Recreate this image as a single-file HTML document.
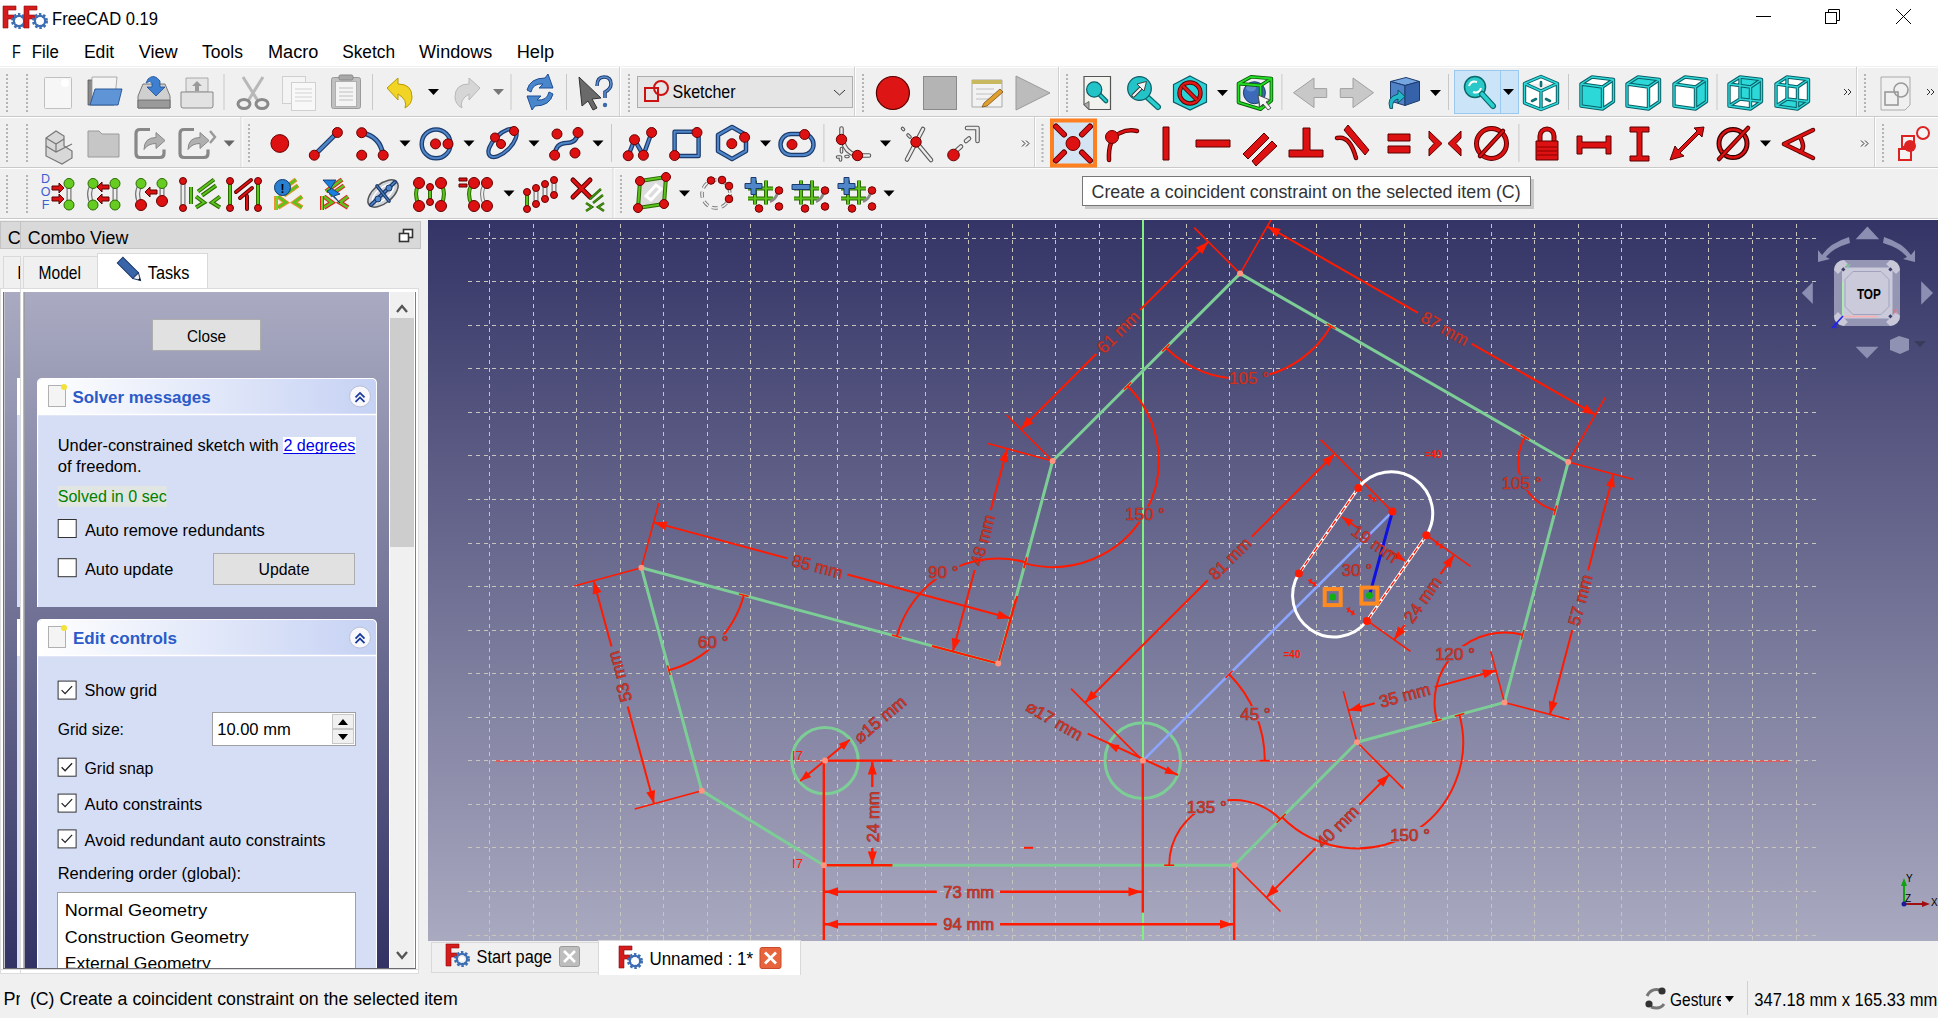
<!DOCTYPE html><html><head><meta charset="utf-8"><style>html,body{margin:0;padding:0;background:#f0f0f0}body{width:1938px;height:1018px;overflow:hidden}svg{display:block}</style></head><body><svg width="1938" height="1018" viewBox="0 0 1938 1018"><rect x="0" y="0" width="1938" height="66" fill="#ffffff" />
<g transform="translate(3,6) scale(1.0)"><path d="M0,0 H13 V4 H5 V9 H11 V13 H5 V22 H0Z" fill="#d41c1c" stroke="#8a0a0a" stroke-width="0.6"/><circle cx="16" cy="15" r="6" fill="none" stroke="#3d6eb4" stroke-width="4" stroke-dasharray="2.2 1.6"/><circle cx="16" cy="15" r="5.2" fill="none" stroke="#3d6eb4" stroke-width="2.2"/><circle cx="16" cy="15" r="2.2" fill="#fff"/></g>
<g transform="translate(24,6) scale(1.0)"><path d="M0,0 H13 V4 H5 V9 H11 V13 H5 V22 H0Z" fill="#d41c1c" stroke="#8a0a0a" stroke-width="0.6"/><circle cx="16" cy="15" r="6" fill="none" stroke="#3d6eb4" stroke-width="4" stroke-dasharray="2.2 1.6"/><circle cx="16" cy="15" r="5.2" fill="none" stroke="#3d6eb4" stroke-width="2.2"/><circle cx="16" cy="15" r="2.2" fill="#fff"/></g>
<text x="52.0" y="24.5" font-family="Liberation Sans" font-size="18" fill="#000" text-anchor="start" textLength="106.0" lengthAdjust="spacingAndGlyphs" >FreeCAD 0.19</text>
<text x="12.1" y="57.5" font-family="Liberation Sans" font-size="18" fill="#000" text-anchor="start" textLength="8.8" lengthAdjust="spacingAndGlyphs" >F</text>
<text x="31.8" y="57.5" font-family="Liberation Sans" font-size="18" fill="#000" text-anchor="start" textLength="27.1" lengthAdjust="spacingAndGlyphs" >File</text>
<text x="83.9" y="57.5" font-family="Liberation Sans" font-size="18" fill="#000" text-anchor="start" textLength="30.3" lengthAdjust="spacingAndGlyphs" >Edit</text>
<text x="138.7" y="57.5" font-family="Liberation Sans" font-size="18" fill="#000" text-anchor="start" textLength="39.0" lengthAdjust="spacingAndGlyphs" >View</text>
<text x="202.1" y="57.5" font-family="Liberation Sans" font-size="18" fill="#000" text-anchor="start" textLength="40.8" lengthAdjust="spacingAndGlyphs" >Tools</text>
<text x="268.0" y="57.5" font-family="Liberation Sans" font-size="18" fill="#000" text-anchor="start" textLength="50.4" lengthAdjust="spacingAndGlyphs" >Macro</text>
<text x="342.2" y="57.5" font-family="Liberation Sans" font-size="18" fill="#000" text-anchor="start" textLength="52.8" lengthAdjust="spacingAndGlyphs" >Sketch</text>
<text x="419.1" y="57.5" font-family="Liberation Sans" font-size="18" fill="#000" text-anchor="start" textLength="73.2" lengthAdjust="spacingAndGlyphs" >Windows</text>
<text x="516.7" y="57.5" font-family="Liberation Sans" font-size="18" fill="#000" text-anchor="start" textLength="37.5" lengthAdjust="spacingAndGlyphs" >Help</text>
<line x1="1756.0" y1="16.5" x2="1771.0" y2="16.5" stroke="#000" stroke-width="1" />
<rect x="1825.5" y="12.5" width="11" height="11" fill="none" stroke="#000" stroke-width="1" />
<path d="M1828.5,12.5 V9.5 H1839.5 V20.5 H1836.5" fill="none" stroke="#000" stroke-width="1"/>
<line x1="1896.0" y1="9.0" x2="1911.0" y2="24.0" stroke="#000" stroke-width="1" />
<line x1="1911.0" y1="9.0" x2="1896.0" y2="24.0" stroke="#000" stroke-width="1" />
<rect x="0" y="66" width="1938" height="154" fill="#f0f0f0" />
<rect x="0" y="67" width="1938" height="1" fill="#ffffff" />
<rect x="0" y="116" width="1938" height="1" fill="#c9c9c9" />
<rect x="0" y="117" width="1938" height="1" fill="#ffffff" />
<rect x="0" y="167" width="1938" height="1" fill="#c9c9c9" />
<rect x="0" y="168" width="1938" height="1" fill="#ffffff" />
<rect x="0" y="218" width="1938" height="1" fill="#c9c9c9" />
<rect x="0" y="219" width="1938" height="1" fill="#ffffff" />
<path d="M6,74h2v2h-2zM6,78h2v2h-2zM6,82h2v2h-2zM6,86h2v2h-2zM6,90h2v2h-2zM6,94h2v2h-2zM6,98h2v2h-2zM6,102h2v2h-2zM6,106h2v2h-2zM6,110h2v2h-2z" fill="#b4b4b4"/>
<path d="M26,74h2v2h-2zM26,78h2v2h-2zM26,82h2v2h-2zM26,86h2v2h-2zM26,90h2v2h-2zM26,94h2v2h-2zM26,98h2v2h-2zM26,102h2v2h-2zM26,106h2v2h-2zM26,110h2v2h-2z" fill="#b4b4b4"/>
<rect x="44.5" y="77.5" width="27" height="31" fill="#f6f6f6" stroke="#c0c0c0" stroke-width="1" rx="1" />
<circle cx="65" cy="83" r="4" fill="#ffffff"/>
<path d="M88,80 h8 l2,3 h16 v22 h-26z" fill="#8a8a8a" stroke="#555" stroke-width="0.8"/>
<path d="M92,77 h25 l-2,20 h-23z" fill="#f4f4f4" stroke="#999" stroke-width="0.8"/>
<path d="M95,89 h27 l-4,16 h-28z" fill="#5f95d6" stroke="#2d5a9a" stroke-width="1"/>
<path d="M138,96 l5,-12 h22 l5,12 v12 h-32z" fill="#cfcfcf" stroke="#777" stroke-width="1"/>
<path d="M138,100 h32 v8 h-32z" fill="#9a9a9a" stroke="#666" stroke-width="0.8"/>
<path d="M148,79 q6,-6 12,2 v6 h5 l-9,9 l-9,-9 h5 v-4 q-2,-3 -6,0z" fill="#3f7fd0" stroke="#1e4f95" stroke-width="0.8"/>
<path d="M186,78 h22 v14 h-22z" fill="#e6e6e6" stroke="#999" stroke-width="0.8"/>
<path d="M181,92 h32 v14 a2,2 0 0 1 -2,2 h-28 a2,2 0 0 1 -2,-2z" fill="#e2e2e2" stroke="#888" stroke-width="1"/>
<path d="M197,81 l5,5 h-3 v5 h-4 v-5 h-3z" fill="#9a9a9a"/>
<rect x="223.5" y="74" width="1" height="36" fill="#c8c8c8" />
<path d="M243,77 L258,101 M263,77 L248,101" stroke="#b8b8b8" stroke-width="3" fill="none"/>
<ellipse cx="244" cy="104" rx="6" ry="4.5" fill="none" stroke="#8a8a8a" stroke-width="3"/><ellipse cx="262" cy="104" rx="6" ry="4.5" fill="none" stroke="#8a8a8a" stroke-width="3"/>
<rect x="282.5" y="76.5" width="23" height="27" fill="#f4f4f4" stroke="#d0d0d0" stroke-width="1" />
<rect x="291.5" y="82.5" width="24" height="28" fill="#f8f8f8" stroke="#d0d0d0" stroke-width="1" />
<line x1="295.0" y1="89.0" x2="312.0" y2="89.0" stroke="#d8d8d8" stroke-width="1.2" />
<line x1="295.0" y1="93.0" x2="312.0" y2="93.0" stroke="#d8d8d8" stroke-width="1.2" />
<line x1="295.0" y1="97.0" x2="312.0" y2="97.0" stroke="#d8d8d8" stroke-width="1.2" />
<line x1="295.0" y1="101.0" x2="312.0" y2="101.0" stroke="#d8d8d8" stroke-width="1.2" />
<rect x="331.5" y="77.5" width="29" height="31" fill="#c0c0c0" stroke="#9a9a9a" stroke-width="1" rx="2" />
<rect x="335.5" y="81.5" width="21" height="25" fill="#f4f4f4" stroke="#b0b0b0" stroke-width="1" />
<rect x="339" y="75" width="14" height="5" fill="#a8a8a8" stroke="#888" stroke-width="1" rx="1.5" />
<line x1="339.0" y1="88.0" x2="353.0" y2="88.0" stroke="#c8c8c8" stroke-width="1.2" />
<line x1="339.0" y1="92.0" x2="353.0" y2="92.0" stroke="#c8c8c8" stroke-width="1.2" />
<line x1="339.0" y1="96.0" x2="353.0" y2="96.0" stroke="#c8c8c8" stroke-width="1.2" />
<line x1="339.0" y1="100.0" x2="353.0" y2="100.0" stroke="#c8c8c8" stroke-width="1.2" />
<rect x="372" y="74" width="1" height="36" fill="#c8c8c8" />
<path d="M387,88 L398,78 V84 Q412,84 412,97 Q412,104 405,108 Q408,100 398,94 V100Z" fill="#f2d424" stroke="#b89a00" stroke-width="1"/>
<path d="M428,89 h11 l-5.5,6z" fill="#000"/>
<path d="M480,88 L469,78 V84 Q455,84 455,97 Q455,104 462,108 Q459,100 469,94 V100Z" fill="#d6d6d6" stroke="#b8b8b8" stroke-width="1"/>
<path d="M493,89 h11 l-5.5,6z" fill="#777"/>
<rect x="510.5" y="74" width="1" height="36" fill="#c8c8c8" />
<path d="M527,90 Q530,78 545,78 L548,74 L553,88 L539,88 L543,84 Q533,83 531,92Z" fill="#4a86cc" stroke="#1e4f95" stroke-width="1"/>
<path d="M553,94 Q550,106 535,106 L532,110 L527,96 L541,96 L537,100 Q547,101 549,92Z" fill="#4a86cc" stroke="#1e4f95" stroke-width="1"/>
<rect x="566" y="74" width="1" height="36" fill="#c8c8c8" />
<path d="M579,77 L601,98 L592,99 L597,108 L593,110 L588,101 L582,106Z" fill="#6a6a6a" stroke="#333" stroke-width="1"/>
<path d="M597,86 Q597,77 604,77 Q611,77 611,84 Q611,89 605,92 V98" fill="none" stroke="#1c3a6e" stroke-width="3.5"/><path d="M597,86 Q597,77 604,77 Q611,77 611,84 Q611,89 605,92 V98" fill="none" stroke="#5a8ed0" stroke-width="1.6"/>
<circle cx="605" cy="105" r="2.2" fill="#3a6aaa"/>
<rect x="619" y="67" width="1" height="49" fill="#d0d0d0" />
<rect x="620" y="67" width="1" height="49" fill="#ffffff" />
<path d="M628,74h2v2h-2zM628,78h2v2h-2zM628,82h2v2h-2zM628,86h2v2h-2zM628,90h2v2h-2zM628,94h2v2h-2zM628,98h2v2h-2zM628,102h2v2h-2zM628,106h2v2h-2zM628,110h2v2h-2z" fill="#b4b4b4"/>
<rect x="637.5" y="76.5" width="215" height="31" fill="#e5e5e5" stroke="#adadad" stroke-width="1" />
<rect x="645" y="88" width="13" height="13" fill="none" stroke="#cc1111" stroke-width="2"/><circle cx="661" cy="88" r="7" fill="none" stroke="#cc1111" stroke-width="2"/>
<text x="672.5" y="98.0" font-family="Liberation Sans" font-size="18" fill="#000" text-anchor="start" textLength="63.0" lengthAdjust="spacingAndGlyphs" >Sketcher</text>
<path d="M834,90 l5.5,5 l5.5,-5" fill="none" stroke="#333" stroke-width="1"/>
<rect x="854" y="67" width="1" height="49" fill="#d0d0d0" />
<rect x="855" y="67" width="1" height="49" fill="#ffffff" />
<path d="M862,74h2v2h-2zM862,78h2v2h-2zM862,82h2v2h-2zM862,86h2v2h-2zM862,90h2v2h-2zM862,94h2v2h-2zM862,98h2v2h-2zM862,102h2v2h-2zM862,106h2v2h-2zM862,110h2v2h-2z" fill="#b4b4b4"/>
<circle cx="892.9" cy="93" r="16.5" fill="#dd1515" stroke="#5a0000" stroke-width="1.2"/>
<rect x="923.5" y="76.5" width="33" height="33" fill="#b4b4b4" stroke="#8a8a8a" stroke-width="1" />
<path d="M972,80 h30 v27 h-30z" fill="#f2f2f2" stroke="#aaa" stroke-width="1"/><path d="M972,80 h30 v4 h-30z" fill="#c8b860"/>
<line x1="976.0" y1="89.0" x2="994.0" y2="89.0" stroke="#c0c0c0" stroke-width="1" />
<line x1="976.0" y1="94.0" x2="994.0" y2="94.0" stroke="#c0c0c0" stroke-width="1" />
<line x1="976.0" y1="99.0" x2="994.0" y2="99.0" stroke="#c0c0c0" stroke-width="1" />
<path d="M984,103 L1000,89 L1003,92 L987,106 L982,107Z" fill="#e0a030" stroke="#7a5010" stroke-width="0.8"/>
<path d="M1016,76 L1050,93 L1016,110Z" fill="#bcbcbc" stroke="#9a9a9a" stroke-width="1"/>
<rect x="1058" y="67" width="1" height="49" fill="#d0d0d0" />
<rect x="1059" y="67" width="1" height="49" fill="#ffffff" />
<path d="M1066,74h2v2h-2zM1066,78h2v2h-2zM1066,82h2v2h-2zM1066,86h2v2h-2zM1066,90h2v2h-2zM1066,94h2v2h-2zM1066,98h2v2h-2zM1066,102h2v2h-2zM1066,106h2v2h-2zM1066,110h2v2h-2z" fill="#b4b4b4"/>
<path d="M1084,76.5 h26.5 v33 h-21.5 l-5,-5z" fill="#f2f2ee" stroke="#555" stroke-width="1.2"/><path d="M1084,104.5 l5,-3 v8z" fill="#aaa" stroke="#555" stroke-width="0.8"/>
<path d="M1099,94 L1106,101" fill="none" stroke="#0a6a6a" stroke-width="4.6" stroke-linecap="round" stroke-linejoin="round"/>
<path d="M1099,94 L1106,101" fill="none" stroke="#2ad0d0" stroke-width="2.1999999999999997" stroke-linecap="round" stroke-linejoin="round"/>
<circle cx="1094.2" cy="89.5" r="7.6" fill="#22c4c8" stroke="#0a5a66" stroke-width="1.2"/>
<path d="M1146,96 L1158,107" fill="none" stroke="#0a6a6a" stroke-width="6" stroke-linecap="round" stroke-linejoin="round"/>
<path d="M1146,96 L1158,107" fill="none" stroke="#2ad0d0" stroke-width="3.6" stroke-linecap="round" stroke-linejoin="round"/>
<circle cx="1139.5" cy="88.5" r="11.8" fill="#22c4c8" stroke="#0a5a66" stroke-width="1.2"/>
<path d="M1133.5,95.5 L1141,88" stroke="#333" stroke-width="4" stroke-linecap="round"/><path d="M1133.5,95.5 L1141,88" stroke="#f4f4f4" stroke-width="2.2" stroke-linecap="round"/><path d="M1137,84 L1146.5,81.5 L1144,91Z" fill="#f4f4f4" stroke="#333" stroke-width="0.9"/>
<path d="M1190,76 L1206.5,84.5 V102 L1190,110 L1173.5,102 V84.5Z" fill="#2ad2d6" stroke="#0a5a66" stroke-width="1.2"/>
<circle cx="1190" cy="93" r="10.5" fill="none" stroke="#550000" stroke-width="4.4"/><circle cx="1190" cy="93" r="10.5" fill="none" stroke="#e01818" stroke-width="2.6"/><path d="M1183,86 L1197,100" stroke="#550000" stroke-width="4.4"/><path d="M1183,86 L1197,100" stroke="#e01818" stroke-width="2.6"/>
<path d="M1217,90 h11 l-5.5,6z" fill="#000"/>
<circle cx="1254.4" cy="92.7" r="11" fill="#3a6ab8" stroke="#1c3a6e" stroke-width="1"/><ellipse cx="1251" cy="88" rx="5" ry="3.5" fill="#7aa4dc" opacity="0.6"/>
<path d="M1238.5,83.6 L1251,76.8 L1271.4,78.5 L1260.6,85.5 Z M1238.5,83.6 V102.5 L1260.6,109.2 V85.5 M1260.6,109.2 L1271.4,100.6 V78.5" fill="none" stroke="#0a5a0a" stroke-width="3.6" stroke-linejoin="round"/><path d="M1238.5,83.6 L1251,76.8 L1271.4,78.5 L1260.6,85.5 Z M1238.5,83.6 V102.5 L1260.6,109.2 V85.5 M1260.6,109.2 L1271.4,100.6 V78.5" fill="none" stroke="#22dd22" stroke-width="1.8" stroke-linejoin="round"/>
<path d="M1258,95 L1260,107 L1263,104 L1268,110 L1271,108 L1266,102 L1270,100Z" fill="#f4f4f4" stroke="#444" stroke-width="0.9"/>
<rect x="1281.4" y="74" width="1" height="36" fill="#c8c8c8" />
<path d="M1293.5,92.7 L1314,78 V88.6 H1326.7 V97.5 H1314 V107.6Z" fill="#c8c8c8" stroke="#a0a0a0" stroke-width="1"/>
<path d="M1373.5,92.7 L1353,78 V88.6 H1340.3 V97.5 H1353 V107.6Z" fill="#c8c8c8" stroke="#a0a0a0" stroke-width="1"/>
<path d="M1390.5,81.5 L1406,77.5 L1419.5,81.5 L1405,85.5Z" fill="#76a6e0" stroke="#1c3a6e" stroke-width="1"/>
<path d="M1390.5,81.5 L1405,85.5 V105.5 L1390.5,101Z" fill="#4f82c6" stroke="#1c3a6e" stroke-width="1"/>
<path d="M1405,85.5 L1419.5,81.5 V100.5 L1405,105.5Z" fill="#3562a8" stroke="#1c3a6e" stroke-width="1"/>
<path d="M1390,108.5 Q1386,97 1398,94 V90 L1405,96.5 L1398,103 V99 Q1392,100 1392.5,108.5Z" fill="#22b8c8" stroke="#0a4a5a" stroke-width="0.9"/>
<path d="M1430,90 h11 l-5.5,6z" fill="#000"/>
<rect x="1448" y="74" width="1" height="36" fill="#c8c8c8" />
<rect x="1454.5" y="70.5" width="64" height="43" fill="#cce4f7" stroke="#99c9ef" stroke-width="1" />
<line x1="1500.5" y1="71.0" x2="1500.5" y2="113.0" stroke="#99c9ef" stroke-width="1" />
<circle cx="1475" cy="87" r="10.5" fill="#2ac8c8" stroke="#0a6a6a" stroke-width="1.5"/>
<path d="M1482,94 L1493,106" fill="none" stroke="#0a6a6a" stroke-width="6" stroke-linecap="round" stroke-linejoin="round"/>
<path d="M1482,94 L1493,106" fill="none" stroke="#2ad0d0" stroke-width="3.6" stroke-linecap="round" stroke-linejoin="round"/>
<path d="M1469,86 q2,-6 8,-4 M1481,88 q-2,6 -8,4" fill="none" stroke="#fff" stroke-width="2"/>
<path d="M1503,89 h11 l-5.5,6z" fill="#000"/>
<path d="M1541,76.5 L1557.5,83.5 L1557.5,103 L1541,109.5 L1524.5,103 L1524.5,83.5Z M1524.5,83.5 L1541,91 L1557.5,83.5 M1541,91 L1541,109.5" fill="#ffffff"/>
<path d="M1541,76.5 L1557.5,83.5 L1557.5,103 L1541,109.5 L1524.5,103 L1524.5,83.5Z M1524.5,83.5 L1541,91 L1557.5,83.5 M1541,91 L1541,109.5" fill="none" stroke="#0b5f66" stroke-width="3.4" stroke-linejoin="round"/>
<path d="M1541,76.5 L1557.5,83.5 L1557.5,103 L1541,109.5 L1524.5,103 L1524.5,83.5Z M1524.5,83.5 L1541,91 L1557.5,83.5 M1541,91 L1541,109.5" fill="none" stroke="#2cd8d8" stroke-width="1.4" stroke-linejoin="round"/>
<path d="M1541,82 V86 M1532,101 L1536,99 M1546,99 L1550,101" fill="none" stroke="#0a6a6a" stroke-width="2.6" stroke-linecap="round" stroke-linejoin="round"/>
<path d="M1541,82 V86 M1532,101 L1536,99 M1546,99 L1550,101" fill="none" stroke="#2ad0d0" stroke-width="0.20000000000000018" stroke-linecap="round" stroke-linejoin="round"/>
<rect x="1568" y="74" width="1" height="36" fill="#c8c8c8" />
<path d="M1581.0,84.0 L1592.0,77.0 L1613.5,79.5 L1613.5,101.5 L1602.5,109.0 L1581.0,106.0Z" fill="#ffffff"/>
<path d="M1581.0,84.0 L1602.5,87.0 L1602.5,109.0 L1581.0,106.0Z" fill="#2cd8d8"/>
<path d="M1581.0,84.0 L1592.0,77.0 L1613.5,79.5 L1613.5,101.5 L1602.5,109.0 L1581.0,106.0Z M1581,84 L1602.5,87 L1613.5,79.5 M1602.5,87 L1602.5,109" fill="none" stroke="#0b5f66" stroke-width="3.4" stroke-linejoin="round"/>
<path d="M1581.0,84.0 L1592.0,77.0 L1613.5,79.5 L1613.5,101.5 L1602.5,109.0 L1581.0,106.0Z M1581,84 L1602.5,87 L1613.5,79.5 M1602.5,87 L1602.5,109" fill="none" stroke="#2cd8d8" stroke-width="1.4" stroke-linejoin="round"/>
<path d="M1627.0,84.0 L1638.0,77.0 L1659.5,79.5 L1659.5,101.5 L1648.5,109.0 L1627.0,106.0Z" fill="#ffffff"/>
<path d="M1627.0,84.0 L1638.0,77.0 L1659.5,79.5 L1648.5,87.0Z" fill="#2cd8d8"/>
<path d="M1627.0,84.0 L1638.0,77.0 L1659.5,79.5 L1659.5,101.5 L1648.5,109.0 L1627.0,106.0Z M1627,84 L1648.5,87 L1659.5,79.5 M1648.5,87 L1648.5,109" fill="none" stroke="#0b5f66" stroke-width="3.4" stroke-linejoin="round"/>
<path d="M1627.0,84.0 L1638.0,77.0 L1659.5,79.5 L1659.5,101.5 L1648.5,109.0 L1627.0,106.0Z M1627,84 L1648.5,87 L1659.5,79.5 M1648.5,87 L1648.5,109" fill="none" stroke="#2cd8d8" stroke-width="1.4" stroke-linejoin="round"/>
<path d="M1674.0,84.0 L1685.0,77.0 L1706.5,79.5 L1706.5,101.5 L1695.5,109.0 L1674.0,106.0Z" fill="#ffffff"/>
<path d="M1695.5,87.0 L1706.5,79.5 L1706.5,101.5 L1695.5,109.0Z" fill="#2cd8d8"/>
<path d="M1674.0,84.0 L1685.0,77.0 L1706.5,79.5 L1706.5,101.5 L1695.5,109.0 L1674.0,106.0Z M1674,84 L1695.5,87 L1706.5,79.5 M1695.5,87 L1695.5,109" fill="none" stroke="#0b5f66" stroke-width="3.4" stroke-linejoin="round"/>
<path d="M1674.0,84.0 L1685.0,77.0 L1706.5,79.5 L1706.5,101.5 L1695.5,109.0 L1674.0,106.0Z M1674,84 L1695.5,87 L1706.5,79.5 M1695.5,87 L1695.5,109" fill="none" stroke="#2cd8d8" stroke-width="1.4" stroke-linejoin="round"/>
<rect x="1716.5" y="74" width="1" height="36" fill="#c8c8c8" />
<path d="M1729.0,84.0 L1740.0,77.0 L1761.5,79.5 L1761.5,101.5 L1750.5,109.0 L1729.0,106.0Z" fill="#ffffff"/>
<path d="M1740.0,77.0 L1761.5,79.5 L1761.5,101.5 L1740.0,99.0Z" fill="#2cd8d8"/>
<path d="M1729.0,84.0 L1740.0,77.0 L1761.5,79.5 L1761.5,101.5 L1750.5,109.0 L1729.0,106.0Z M1729,84 L1750.5,87 L1761.5,79.5 M1750.5,87 L1750.5,109 M1740,77 L1740,99 L1761.5,101.5 M1740,99 L1729,106" fill="none" stroke="#0b5f66" stroke-width="3.4" stroke-linejoin="round"/>
<path d="M1729.0,84.0 L1740.0,77.0 L1761.5,79.5 L1761.5,101.5 L1750.5,109.0 L1729.0,106.0Z M1729,84 L1750.5,87 L1761.5,79.5 M1750.5,87 L1750.5,109 M1740,77 L1740,99 L1761.5,101.5 M1740,99 L1729,106" fill="none" stroke="#2cd8d8" stroke-width="1.4" stroke-linejoin="round"/>
<path d="M1776.0,84.0 L1787.0,77.0 L1808.5,79.5 L1808.5,101.5 L1797.5,109.0 L1776.0,106.0Z" fill="#ffffff"/>
<path d="M1776.0,106.0 L1797.5,109.0 L1808.5,101.5 L1787.0,99.0Z" fill="#2cd8d8"/>
<path d="M1776.0,84.0 L1787.0,77.0 L1808.5,79.5 L1808.5,101.5 L1797.5,109.0 L1776.0,106.0Z M1776,84 L1797.5,87 L1808.5,79.5 M1797.5,87 L1797.5,109 M1787,77 L1787,99 L1808.5,101.5 M1787,99 L1776,106" fill="none" stroke="#0b5f66" stroke-width="3.4" stroke-linejoin="round"/>
<path d="M1776.0,84.0 L1787.0,77.0 L1808.5,79.5 L1808.5,101.5 L1797.5,109.0 L1776.0,106.0Z M1776,84 L1797.5,87 L1808.5,79.5 M1797.5,87 L1797.5,109 M1787,77 L1787,99 L1808.5,101.5 M1787,99 L1776,106" fill="none" stroke="#2cd8d8" stroke-width="1.4" stroke-linejoin="round"/>
<path d="M1844.0,89.0 l3,3 l-3,3 M1848.0,89.0 l3,3 l-3,3" fill="none" stroke="#333" stroke-width="1"/>
<rect x="1856" y="67" width="1" height="49" fill="#d0d0d0" />
<rect x="1857" y="67" width="1" height="49" fill="#ffffff" />
<path d="M1864,74h2v2h-2zM1864,78h2v2h-2zM1864,82h2v2h-2zM1864,86h2v2h-2zM1864,90h2v2h-2zM1864,94h2v2h-2zM1864,98h2v2h-2zM1864,102h2v2h-2zM1864,106h2v2h-2zM1864,110h2v2h-2z" fill="#b4b4b4"/>
<path d="M1881,77 h29 v28 l-5,5 h-24z" fill="#f0f0f0" stroke="#aaa" stroke-width="1"/><rect x="1885" y="92" width="13" height="13" fill="none" stroke="#999" stroke-width="1.6"/><circle cx="1901" cy="90" r="7" fill="none" stroke="#999" stroke-width="1.6"/>
<path d="M1927.0,89.0 l3,3 l-3,3 M1931.0,89.0 l3,3 l-3,3" fill="none" stroke="#333" stroke-width="1"/>
<path d="M6,124h2v2h-2zM6,128h2v2h-2zM6,132h2v2h-2zM6,136h2v2h-2zM6,140h2v2h-2zM6,144h2v2h-2zM6,148h2v2h-2zM6,152h2v2h-2zM6,156h2v2h-2zM6,160h2v2h-2z" fill="#b4b4b4"/>
<path d="M26,124h2v2h-2zM26,128h2v2h-2zM26,132h2v2h-2zM26,136h2v2h-2zM26,140h2v2h-2zM26,144h2v2h-2zM26,148h2v2h-2zM26,152h2v2h-2zM26,156h2v2h-2zM26,160h2v2h-2z" fill="#b4b4b4"/>
<path d="M46,138 L56,131 L64,136 V146 L72,151 V158 L62,164 L46,156Z" fill="#d8d8d8" stroke="#777" stroke-width="1.2"/>
<path d="M46,138 L56,144 L64,139 M56,144 V152 M46,146 L56,152 L72,144" fill="none" stroke="#777" stroke-width="1.2"/>
<path d="M88,131 h11 l3,3 h17 v23 h-31z" fill="#c6c6c6" stroke="#9a9a9a" stroke-width="1"/>
<path d="M150,129.5 h-10 q-4,0 -4,4 v20 q0,4 4,4 h20 q4,0 4,-4 v-4" fill="none" stroke="#888" stroke-width="3.2"/>
<path d="M144,149.5 q0,-12 12,-12 v-5 l9,8 l-9,8 v-5 q-8,0 -12,6z" fill="#b0b0b0" stroke="#888" stroke-width="1"/>
<path d="M194,129.5 h-10 q-4,0 -4,4 v20 q0,4 4,4 h20 q4,0 4,-4 v-4" fill="none" stroke="#888" stroke-width="3.2"/>
<path d="M188,149.5 q0,-12 12,-12 v-5 l9,8 l-9,8 v-5 q-8,0 -12,6z" fill="#b0b0b0" stroke="#888" stroke-width="1"/>
<path d="M210,131 l5,6 l-5,6" fill="none" stroke="#999" stroke-width="2.4"/>
<path d="M223.7,140.5 h11 l-5.5,6z" fill="#666"/>
<rect x="240.6" y="117" width="1" height="50" fill="#d0d0d0" />
<rect x="241.6" y="117" width="1" height="50" fill="#ffffff" />
<path d="M248,124h2v2h-2zM248,128h2v2h-2zM248,132h2v2h-2zM248,136h2v2h-2zM248,140h2v2h-2zM248,144h2v2h-2zM248,148h2v2h-2zM248,152h2v2h-2zM248,156h2v2h-2zM248,160h2v2h-2z" fill="#b4b4b4"/>
<circle cx="279.8" cy="143.5" r="8.9" fill="#dd1111" stroke="#6a0000" stroke-width="1"/>
<path d="M314.3,155.2 L337.4,132.5" fill="none" stroke="#1c3a6e" stroke-width="5" stroke-linecap="round" stroke-linejoin="round"/>
<path d="M314.3,155.2 L337.4,132.5" fill="none" stroke="#4f86c8" stroke-width="2.6" stroke-linecap="round" stroke-linejoin="round"/>
<circle cx="314.3" cy="155.2" r="5" fill="#dd1111" stroke="#6a0000" stroke-width="1"/>
<circle cx="337.4" cy="132.5" r="5" fill="#dd1111" stroke="#6a0000" stroke-width="1"/>
<path d="M361.7,132.7 Q380,136 383.2,155.2" fill="none" stroke="#1c3a6e" stroke-width="5" stroke-linecap="round" stroke-linejoin="round"/>
<path d="M361.7,132.7 Q380,136 383.2,155.2" fill="none" stroke="#4f86c8" stroke-width="2.6" stroke-linecap="round" stroke-linejoin="round"/>
<circle cx="361.7" cy="132.7" r="5" fill="#dd1111" stroke="#6a0000" stroke-width="1"/>
<circle cx="361.7" cy="155.2" r="5" fill="#dd1111" stroke="#6a0000" stroke-width="1"/>
<circle cx="383.2" cy="155.2" r="5" fill="#dd1111" stroke="#6a0000" stroke-width="1"/>
<path d="M399.5,140.5 h11 l-5.5,6z" fill="#000"/>
<path d="M436.1,143.9 m-14.4,0 a14.4,14.4 0 1 0 28.8,0 a14.4,14.4 0 1 0 -28.8,0" fill="none" stroke="#1c3a6e" stroke-width="4.5" stroke-linecap="round" stroke-linejoin="round"/>
<path d="M436.1,143.9 m-14.4,0 a14.4,14.4 0 1 0 28.8,0 a14.4,14.4 0 1 0 -28.8,0" fill="none" stroke="#4f86c8" stroke-width="2.1" stroke-linecap="round" stroke-linejoin="round"/>
<circle cx="435.5" cy="143.9" r="5" fill="#dd1111" stroke="#6a0000" stroke-width="1"/>
<circle cx="448" cy="143.9" r="5" fill="#dd1111" stroke="#6a0000" stroke-width="1"/>
<path d="M463.5,140.5 h11 l-5.5,6z" fill="#000"/>
<g transform="translate(502.5,143) rotate(-45)">
<path d="M-18,0 a18,8.5 0 1 0 36,0 a18,8.5 0 1 0 -36,0" fill="none" stroke="#1c3a6e" stroke-width="4.2" stroke-linecap="round" stroke-linejoin="round"/>
<path d="M-18,0 a18,8.5 0 1 0 36,0 a18,8.5 0 1 0 -36,0" fill="none" stroke="#4f86c8" stroke-width="1.8000000000000003" stroke-linecap="round" stroke-linejoin="round"/>
</g>
<circle cx="495" cy="137.5" r="4.5" fill="#dd1111" stroke="#6a0000" stroke-width="1"/>
<circle cx="514" cy="131" r="4.5" fill="#dd1111" stroke="#6a0000" stroke-width="1"/>
<circle cx="501" cy="144" r="4.5" fill="#dd1111" stroke="#6a0000" stroke-width="1"/>
<path d="M528.5,140.5 h11 l-5.5,6z" fill="#000"/>
<path d="M554.6,155.2 Q556,143 566,143 Q577,143 578,132.5" fill="none" stroke="#1c3a6e" stroke-width="4.5" stroke-linecap="round" stroke-linejoin="round"/>
<path d="M554.6,155.2 Q556,143 566,143 Q577,143 578,132.5" fill="none" stroke="#4f86c8" stroke-width="2.1" stroke-linecap="round" stroke-linejoin="round"/>
<circle cx="557" cy="134" r="5" fill="#dd1111" stroke="#6a0000" stroke-width="1"/>
<circle cx="578" cy="132.5" r="5" fill="#dd1111" stroke="#6a0000" stroke-width="1"/>
<circle cx="554.6" cy="155.2" r="5" fill="#dd1111" stroke="#6a0000" stroke-width="1"/>
<circle cx="575" cy="153" r="5" fill="#dd1111" stroke="#6a0000" stroke-width="1"/>
<path d="M592.5,140.5 h11 l-5.5,6z" fill="#000"/>
<rect x="611" y="124" width="1" height="38" fill="#c8c8c8" />
<path d="M628.2,155.7 L634.5,139.7 L643.4,155.3 L651.6,132.5" fill="none" stroke="#1c3a6e" stroke-width="4.5" stroke-linecap="round" stroke-linejoin="round"/>
<path d="M628.2,155.7 L634.5,139.7 L643.4,155.3 L651.6,132.5" fill="none" stroke="#4f86c8" stroke-width="2.1" stroke-linecap="round" stroke-linejoin="round"/>
<circle cx="628.2" cy="155.7" r="5" fill="#dd1111" stroke="#6a0000" stroke-width="1"/>
<circle cx="634.5" cy="139.7" r="5" fill="#dd1111" stroke="#6a0000" stroke-width="1"/>
<circle cx="643.4" cy="155.3" r="5" fill="#dd1111" stroke="#6a0000" stroke-width="1"/>
<circle cx="651.6" cy="132.5" r="5" fill="#dd1111" stroke="#6a0000" stroke-width="1"/>
<path d="M674.6,131.8 H698.6 V156 H674.6Z" fill="none" stroke="#1c3a6e" stroke-width="4.5" stroke-linecap="round" stroke-linejoin="round"/>
<path d="M674.6,131.8 H698.6 V156 H674.6Z" fill="none" stroke="#4f86c8" stroke-width="2.1" stroke-linecap="round" stroke-linejoin="round"/>
<circle cx="674.6" cy="155.5" r="5" fill="#dd1111" stroke="#6a0000" stroke-width="1"/>
<circle cx="697" cy="132.5" r="5" fill="#dd1111" stroke="#6a0000" stroke-width="1"/>
<path d="M732,127 L746,135 V151 L732,159 L718,151 V135Z" fill="none" stroke="#1c3a6e" stroke-width="4.5" stroke-linecap="round" stroke-linejoin="round"/>
<path d="M732,127 L746,135 V151 L732,159 L718,151 V135Z" fill="none" stroke="#4f86c8" stroke-width="2.1" stroke-linecap="round" stroke-linejoin="round"/>
<circle cx="731.8" cy="143.7" r="5" fill="#dd1111" stroke="#6a0000" stroke-width="1"/>
<circle cx="744.6" cy="137.3" r="5" fill="#dd1111" stroke="#6a0000" stroke-width="1"/>
<path d="M760,140.5 h11 l-5.5,6z" fill="#000"/>
<path d="M791,134 H803 A10.5,10.5 0 0 1 803,155 H791 A10.5,10.5 0 0 1 791,134Z" fill="none" stroke="#1c3a6e" stroke-width="4.5" stroke-linecap="round" stroke-linejoin="round"/>
<path d="M791,134 H803 A10.5,10.5 0 0 1 803,155 H791 A10.5,10.5 0 0 1 791,134Z" fill="none" stroke="#4f86c8" stroke-width="2.1" stroke-linecap="round" stroke-linejoin="round"/>
<circle cx="792" cy="144.5" r="5" fill="#dd1111" stroke="#6a0000" stroke-width="1"/>
<circle cx="804.6" cy="134.5" r="5" fill="#dd1111" stroke="#6a0000" stroke-width="1"/>
<rect x="823.4" y="124" width="1" height="38" fill="#c8c8c8" />
<path d="M841.5,128.5 V137 M843,141 Q845,152 856,155 M862,155.5 H869" fill="none" stroke="#5a5a5a" stroke-width="4.6" stroke-linecap="round" stroke-linejoin="round"/>
<path d="M841.5,128.5 V137 M843,141 Q845,152 856,155 M862,155.5 H869" fill="none" stroke="#ececec" stroke-width="2.3999999999999995" stroke-linecap="round" stroke-linejoin="round"/>
<path d="M841.5,148.5 V152 M837.5,157 H840.5 V160 M846,156.5 H848" fill="none" stroke="#5a5a5a" stroke-width="3.6" stroke-linecap="round" stroke-linejoin="round"/>
<path d="M841.5,148.5 V152 M837.5,157 H840.5 V160 M846,156.5 H848" fill="none" stroke="#ececec" stroke-width="1.4" stroke-linecap="round" stroke-linejoin="round"/>
<circle cx="841.5" cy="139.5" r="5.2" fill="#dd1111" stroke="#6a0000" stroke-width="1"/>
<circle cx="857.5" cy="155.5" r="5.2" fill="#dd1111" stroke="#6a0000" stroke-width="1"/>
<path d="M880,140.5 h11 l-5.5,6z" fill="#000"/>
<path d="M923,129 L907,159.5 M916,142 L931,160" fill="none" stroke="#5a5a5a" stroke-width="4.6" stroke-linecap="round" stroke-linejoin="round"/>
<path d="M923,129 L907,159.5 M916,142 L931,160" fill="none" stroke="#ececec" stroke-width="2.3999999999999995" stroke-linecap="round" stroke-linejoin="round"/>
<path d="M902.5,128.5 L903.5,129.5 M908,135 L910,137" fill="none" stroke="#5a5a5a" stroke-width="3.6" stroke-linecap="round" stroke-linejoin="round"/>
<path d="M902.5,128.5 L903.5,129.5 M908,135 L910,137" fill="none" stroke="#ececec" stroke-width="1.4" stroke-linecap="round" stroke-linejoin="round"/>
<circle cx="916" cy="142" r="5.2" fill="#dd1111" stroke="#6a0000" stroke-width="1"/>
<path d="M956,151 L961,146.5 M966,141 L969,138.5 M967,128 H977.5 V141" fill="none" stroke="#5a5a5a" stroke-width="4.6" stroke-linecap="round" stroke-linejoin="round"/>
<path d="M956,151 L961,146.5 M966,141 L969,138.5 M967,128 H977.5 V141" fill="none" stroke="#ececec" stroke-width="2.3999999999999995" stroke-linecap="round" stroke-linejoin="round"/>
<circle cx="953.5" cy="155" r="5.8" fill="#dd1111" stroke="#6a0000" stroke-width="1"/>
<path d="M1022.0,140.5 l3,3 l-3,3 M1026.0,140.5 l3,3 l-3,3" fill="none" stroke="#333" stroke-width="1"/>
<rect x="1034" y="117" width="1" height="50" fill="#d0d0d0" />
<rect x="1035" y="117" width="1" height="50" fill="#ffffff" />
<path d="M1041.5,124h2v2h-2zM1041.5,128h2v2h-2zM1041.5,132h2v2h-2zM1041.5,136h2v2h-2zM1041.5,140h2v2h-2zM1041.5,144h2v2h-2zM1041.5,148h2v2h-2zM1041.5,152h2v2h-2zM1041.5,156h2v2h-2zM1041.5,160h2v2h-2z" fill="#b4b4b4"/>
<rect x="1052" y="120.5" width="43" height="45" fill="#d5e4f2" stroke="#ff8020" stroke-width="4" />
<path d="M1064,134.5 L1056,126.5" fill="none" stroke="#5a0000" stroke-width="6" stroke-linecap="round"/>
<path d="M1064,134.5 L1056,126.5" fill="none" stroke="#dd1111" stroke-width="4" stroke-linecap="round"/>
<path d="M1082,134.5 L1090,126.5" fill="none" stroke="#5a0000" stroke-width="6" stroke-linecap="round"/>
<path d="M1082,134.5 L1090,126.5" fill="none" stroke="#dd1111" stroke-width="4" stroke-linecap="round"/>
<path d="M1064,152.5 L1056,160.5" fill="none" stroke="#5a0000" stroke-width="6" stroke-linecap="round"/>
<path d="M1064,152.5 L1056,160.5" fill="none" stroke="#dd1111" stroke-width="4" stroke-linecap="round"/>
<path d="M1082,152.5 L1090,160.5" fill="none" stroke="#5a0000" stroke-width="6" stroke-linecap="round"/>
<path d="M1082,152.5 L1090,160.5" fill="none" stroke="#dd1111" stroke-width="4" stroke-linecap="round"/>
<circle cx="1073" cy="143.5" r="7" fill="#dd1111" stroke="#6a0000" stroke-width="1"/>
<path d="M1109,160 Q1108,138 1120,133 Q1128,129 1137,131" fill="none" stroke="#5a0000" stroke-width="4.5" stroke-linecap="round"/>
<path d="M1109,160 Q1108,138 1120,133 Q1128,129 1137,131" fill="none" stroke="#dd1111" stroke-width="2.5" stroke-linecap="round"/>
<circle cx="1112" cy="137" r="6.5" fill="#dd1111" stroke="#6a0000" stroke-width="1"/>
<path d="M1163,127 h6 v33 h-6z" fill="#dd1111" stroke="#5a0000" stroke-width="1"/>
<path d="M1196,140 h34 v7 h-34z" fill="#dd1111" stroke="#5a0000" stroke-width="1"/>
<path d="M1243,154 L1264,133 L1269,138 L1248,159Z" fill="#dd1111" stroke="#5a0000" stroke-width="1"/>
<path d="M1252,161 L1272,141 L1277,146 L1256,166Z" fill="#dd1111" stroke="#5a0000" stroke-width="1"/>
<path d="M1303,128 h7 v22 h13 v7 h-34 v-7 h14z" fill="#dd1111" stroke="#5a0000" stroke-width="1"/>
<path d="M1337,138 Q1350,135 1356,158" fill="none" stroke="#5a0000" stroke-width="4.5" stroke-linecap="round"/>
<path d="M1337,138 Q1350,135 1356,158" fill="none" stroke="#dd1111" stroke-width="2.5" stroke-linecap="round"/>
<path d="M1344,130 L1348,125 L1369,150 L1365,155Z" fill="#dd1111" stroke="#5a0000" stroke-width="1"/>
<path d="M1388,134 h22 v7 h-22z" fill="#dd1111" stroke="#5a0000" stroke-width="1"/>
<path d="M1388,146 h22 v7 h-22z" fill="#dd1111" stroke="#5a0000" stroke-width="1"/>
<path d="M1429,131 L1442,143.5 L1429,156 V149 L1434,143.5 L1429,138Z" fill="#dd1111" stroke="#5a0000" stroke-width="1"/>
<path d="M1461,131 L1448,143.5 L1461,156 V149 L1456,143.5 L1461,138Z" fill="#dd1111" stroke="#5a0000" stroke-width="1"/>
<circle cx="1491.5" cy="143.5" r="15" fill="none" stroke="#5a0000" stroke-width="5"/><circle cx="1491.5" cy="143.5" r="15" fill="none" stroke="#dd1111" stroke-width="3"/>
<path d="M1480,156 L1503,131" fill="none" stroke="#5a0000" stroke-width="4.5" stroke-linecap="round"/>
<path d="M1480,156 L1503,131" fill="none" stroke="#dd1111" stroke-width="2.5" stroke-linecap="round"/>
<rect x="1518.4" y="124" width="1" height="38" fill="#c8c8c8" />
<path d="M1540,141 V136 a7,7 0 0 1 14,0 v5" fill="none" stroke="#5a0000" stroke-width="5"/><path d="M1540,141 V136 a7,7 0 0 1 14,0 v5" fill="none" stroke="#dd1111" stroke-width="3"/>
<path d="M1536,141 h22 v19 h-22z" fill="#dd1111" stroke="#5a0000" stroke-width="1"/>
<line x1="1537.0" y1="147.0" x2="1557.0" y2="147.0" stroke="#8a0000" stroke-width="1" />
<line x1="1537.0" y1="151.0" x2="1557.0" y2="151.0" stroke="#8a0000" stroke-width="1" />
<line x1="1537.0" y1="155.0" x2="1557.0" y2="155.0" stroke="#8a0000" stroke-width="1" />
<path d="M1577,136 h5 v6 h24 v-6 h5 v18 h-5 v-6 h-24 v6 h-5z" fill="#dd1111" stroke="#5a0000" stroke-width="1"/>
<path d="M1630,127 h19 v5 h-7 v24 h7 v5 h-19 v-5 h7 v-24 h-7z" fill="#dd1111" stroke="#5a0000" stroke-width="1"/>
<path d="M1670,160 L1675,146 L1678,150 L1697,131 L1694,128 L1704,127 L1702,137 L1699,134 L1680,153 L1684,156Z" fill="#dd1111" stroke="#5a0000" stroke-width="1"/>
<circle cx="1733" cy="143.5" r="14" fill="none" stroke="#330000" stroke-width="5"/><circle cx="1733" cy="143.5" r="14" fill="none" stroke="#dd1111" stroke-width="2.5"/>
<path d="M1719,159 L1748,128" fill="none" stroke="#5a0000" stroke-width="4.5" stroke-linecap="round"/>
<path d="M1719,159 L1748,128" fill="none" stroke="#dd1111" stroke-width="2.5" stroke-linecap="round"/>
<path d="M1760,140.5 h11 l-5.5,6z" fill="#000"/>
<path d="M1784,144 L1813,130 M1784,144 L1813,158 M1800,137 Q1806,148 1800,152" fill="none" stroke="#5a0000" stroke-width="4.5" stroke-linecap="round"/>
<path d="M1784,144 L1813,130 M1784,144 L1813,158 M1800,137 Q1806,148 1800,152" fill="none" stroke="#dd1111" stroke-width="2.5" stroke-linecap="round"/>
<path d="M1861.0,140.5 l3,3 l-3,3 M1865.0,140.5 l3,3 l-3,3" fill="none" stroke="#333" stroke-width="1"/>
<rect x="1874" y="117" width="1" height="50" fill="#d0d0d0" />
<rect x="1875" y="117" width="1" height="50" fill="#ffffff" />
<path d="M1882,124h2v2h-2zM1882,128h2v2h-2zM1882,132h2v2h-2zM1882,136h2v2h-2zM1882,140h2v2h-2zM1882,144h2v2h-2zM1882,148h2v2h-2zM1882,152h2v2h-2zM1882,156h2v2h-2zM1882,160h2v2h-2z" fill="#b4b4b4"/>
<rect x="1902" y="136" width="12" height="11" fill="#f4f4f4" stroke="#dd2222" stroke-width="2"/><circle cx="1923" cy="133" r="6" fill="#f4f4f4" stroke="#dd2222" stroke-width="2"/>
<rect x="1899" y="149" width="12" height="11" fill="#f4f4f4" stroke="#dd2222" stroke-width="2"/><circle cx="1910" cy="146" r="6" fill="#dd2222"/>
<path d="M6,175h2v2h-2zM6,179h2v2h-2zM6,183h2v2h-2zM6,187h2v2h-2zM6,191h2v2h-2zM6,195h2v2h-2zM6,199h2v2h-2zM6,203h2v2h-2zM6,207h2v2h-2zM6,211h2v2h-2z" fill="#b4b4b4"/>
<path d="M26,175h2v2h-2zM26,179h2v2h-2zM26,183h2v2h-2zM26,187h2v2h-2zM26,191h2v2h-2zM26,195h2v2h-2zM26,199h2v2h-2zM26,203h2v2h-2zM26,207h2v2h-2zM26,211h2v2h-2z" fill="#b4b4b4"/>
<text x="45.5" y="183.0" font-family="Liberation Sans" font-size="12.5" fill="#3b5fd0" text-anchor="middle" >D</text>
<text x="45.5" y="196.0" font-family="Liberation Sans" font-size="12.5" fill="#3b5fd0" text-anchor="middle" >O</text>
<text x="45.5" y="209.0" font-family="Liberation Sans" font-size="12.5" fill="#3b5fd0" text-anchor="middle" >F</text>
<path d="M69,184 V204" stroke="#777" stroke-width="5"/><path d="M69,184 V204" stroke="#eee" stroke-width="2.6"/>
<circle cx="69" cy="183.5" r="5" fill="#66cc22" stroke="#2a6a00" stroke-width="1"/>
<circle cx="69" cy="205" r="5" fill="#66cc22" stroke="#2a6a00" stroke-width="1"/>
<path d="M52,186 h7 v-3 l5,5 l-5,5 v-3 h-7z" fill="#dd1111" stroke="#5a0000" stroke-width="1"/>
<path d="M52,197 h7 v-3 l5,5 l-5,5 v-3 h-7z" fill="#dd1111" stroke="#5a0000" stroke-width="1"/>
<path d="M115,184 V204" stroke="#777" stroke-width="5"/><path d="M115,184 V204" stroke="#eee" stroke-width="2.6"/>
<path d="M93,184 Q86,194 93,205" fill="none" stroke="#777" stroke-width="5"/><path d="M93,184 Q86,194 93,205" fill="none" stroke="#eee" stroke-width="2.6"/>
<circle cx="93" cy="183.5" r="5" fill="#66cc22" stroke="#2a6a00" stroke-width="1"/>
<circle cx="93" cy="205" r="5" fill="#66cc22" stroke="#2a6a00" stroke-width="1"/>
<circle cx="115" cy="183.5" r="5" fill="#66cc22" stroke="#2a6a00" stroke-width="1"/>
<circle cx="115" cy="205" r="5" fill="#66cc22" stroke="#2a6a00" stroke-width="1"/>
<path d="M109,185 h-7 v-3 l-5,5 l5,5 v-3 h7z" fill="#dd1111" stroke="#5a0000" stroke-width="1"/>
<path d="M109,197 h-7 v-3 l-5,5 l5,5 v-3 h7z" fill="#dd1111" stroke="#5a0000" stroke-width="1"/>
<path d="M162,184 V202" stroke="#777" stroke-width="5"/><path d="M162,184 V202" stroke="#eee" stroke-width="2.6"/>
<path d="M141,184 Q134,194 141,205" fill="none" stroke="#777" stroke-width="5"/><path d="M141,184 Q134,194 141,205" fill="none" stroke="#eee" stroke-width="2.6"/>
<circle cx="141" cy="183.5" r="5" fill="#66cc22" stroke="#2a6a00" stroke-width="1"/>
<circle cx="141" cy="205" r="5.5" fill="#dd1111" stroke="#6a0000" stroke-width="1"/>
<circle cx="162" cy="183.5" r="5" fill="#66cc22" stroke="#2a6a00" stroke-width="1"/>
<circle cx="162" cy="201" r="5.5" fill="#dd1111" stroke="#6a0000" stroke-width="1"/>
<path d="M157,190 h-7 v-3 l-5,5 l5,5 v-3 h7z" fill="#dd1111" stroke="#5a0000" stroke-width="1"/>
<path d="M183,182 V207" stroke="#777" stroke-width="5"/><path d="M183,182 V207" stroke="#eee" stroke-width="2.6"/>
<circle cx="183" cy="181" r="3.5" fill="#dd1111" stroke="#6a0000" stroke-width="1"/>
<circle cx="183" cy="208" r="3.5" fill="#dd1111" stroke="#6a0000" stroke-width="1"/>
<path d="M191,187 V204" fill="none" stroke="#2a6a00" stroke-width="4" stroke-linecap="butt"/>
<path d="M191,187 V204" fill="none" stroke="#5cc21c" stroke-width="2" stroke-linecap="butt"/>
<path d="M198,191.5 L214,179.5 M202,195.5 L216,185.5" fill="none" stroke="#2a6a00" stroke-width="4" stroke-linecap="butt"/>
<path d="M198,191.5 L214,179.5 M202,195.5 L216,185.5" fill="none" stroke="#5cc21c" stroke-width="2" stroke-linecap="butt"/>
<path d="M196,196.5 L204,202.5 L196,207.5 M220,196.5 L212,202.5 L220,207.5" fill="none" stroke="#2a6a00" stroke-width="4" stroke-linecap="butt"/>
<path d="M196,196.5 L204,202.5 L196,207.5 M220,196.5 L212,202.5 L220,207.5" fill="none" stroke="#5cc21c" stroke-width="2" stroke-linecap="butt"/>
<path d="M230,182 V207" fill="none" stroke="#2a6a00" stroke-width="4" stroke-linecap="butt"/>
<path d="M230,182 V207" fill="none" stroke="#5cc21c" stroke-width="2" stroke-linecap="butt"/>
<circle cx="230" cy="181" r="3.5" fill="#dd1111" stroke="#6a0000" stroke-width="1"/>
<circle cx="230" cy="208" r="3.5" fill="#dd1111" stroke="#6a0000" stroke-width="1"/>
<path d="M258,182 V207" fill="none" stroke="#2a6a00" stroke-width="4" stroke-linecap="butt"/>
<path d="M258,182 V207" fill="none" stroke="#5cc21c" stroke-width="2" stroke-linecap="butt"/>
<circle cx="258" cy="181" r="3.5" fill="#dd1111" stroke="#6a0000" stroke-width="1"/>
<circle cx="258" cy="208" r="3.5" fill="#dd1111" stroke="#6a0000" stroke-width="1"/>
<path d="M236,192 L251,180 M240,198 L252,188" fill="none" stroke="#5a0000" stroke-width="4" stroke-linecap="round"/>
<path d="M236,192 L251,180 M240,198 L252,188" fill="none" stroke="#dd1111" stroke-width="2" stroke-linecap="round"/>
<path d="M247,196 V209" fill="none" stroke="#5a0000" stroke-width="4" stroke-linecap="round"/>
<path d="M247,196 V209" fill="none" stroke="#dd1111" stroke-width="2" stroke-linecap="round"/>
<path d="M280,191.5 L296,179.5 M284,195.5 L298,185.5" fill="none" stroke="#f09030" stroke-width="4.6" stroke-linecap="butt"/>
<path d="M280,191.5 L296,179.5 M284,195.5 L298,185.5" fill="none" stroke="#5cc21c" stroke-width="2.5999999999999996" stroke-linecap="butt"/>
<path d="M278,196.5 L286,202.5 L278,207.5 M302,196.5 L294,202.5 L302,207.5" fill="none" stroke="#f09030" stroke-width="4.6" stroke-linecap="butt"/>
<path d="M278,196.5 L286,202.5 L278,207.5 M302,196.5 L294,202.5 L302,207.5" fill="none" stroke="#5cc21c" stroke-width="2.5999999999999996" stroke-linecap="butt"/>
<path d="M276,196 V210" fill="none" stroke="#f09030" stroke-width="4" stroke-linecap="butt"/>
<path d="M276,196 V210" fill="none" stroke="#7ad02a" stroke-width="2" stroke-linecap="butt"/>
<circle cx="282.5" cy="187.5" r="8" fill="#2a80d0" stroke="#0a3a70" stroke-width="1"/><text x="282.5" y="192.5" font-family="Liberation Sans" font-size="12" font-weight="bold" fill="#000" text-anchor="middle">!</text>
<path d="M326,191.5 L342,179.5 M330,195.5 L344,185.5" fill="none" stroke="#dd2222" stroke-width="4.6" stroke-linecap="butt"/>
<path d="M326,191.5 L342,179.5 M330,195.5 L344,185.5" fill="none" stroke="#5cc21c" stroke-width="2.5999999999999996" stroke-linecap="butt"/>
<path d="M324,196.5 L332,202.5 L324,207.5 M348,196.5 L340,202.5 L348,207.5" fill="none" stroke="#dd2222" stroke-width="4.6" stroke-linecap="butt"/>
<path d="M324,196.5 L332,202.5 L324,207.5 M348,196.5 L340,202.5 L348,207.5" fill="none" stroke="#5cc21c" stroke-width="2.5999999999999996" stroke-linecap="butt"/>
<path d="M322,196 V210" fill="none" stroke="#dd2222" stroke-width="4" stroke-linecap="butt"/>
<path d="M322,196 V210" fill="none" stroke="#7ad02a" stroke-width="2" stroke-linecap="butt"/>
<path d="M323,180 L336,180 L331,188 L340,194 L334,196 L340,203 L327,191 L331,189Z" fill="#1a80e0" stroke="#0a2a60" stroke-width="0.8"/>
<g transform="translate(383,193.5) rotate(-40)"><ellipse rx="18" ry="9.5" fill="#cfd4da" stroke="#555" stroke-width="1.5"/><ellipse rx="13" ry="5.5" fill="none" stroke="#fff" stroke-width="1.5"/></g>
<path d="M371,205 L395,182" fill="none" stroke="#1c3a6e" stroke-width="4" stroke-linecap="round" stroke-linejoin="round"/>
<path d="M371,205 L395,182" fill="none" stroke="#4f86c8" stroke-width="1.6" stroke-linecap="round" stroke-linejoin="round"/>
<path d="M377,186 L389,201" fill="none" stroke="#1c3a6e" stroke-width="3.6" stroke-linecap="round" stroke-linejoin="round"/>
<path d="M377,186 L389,201" fill="none" stroke="#4f86c8" stroke-width="1.2000000000000002" stroke-linecap="round" stroke-linejoin="round"/>
<circle cx="378" cy="199" r="3" fill="#4f86c8" stroke="#1c3a6e"/><circle cx="389" cy="188" r="3" fill="#4f86c8" stroke="#1c3a6e"/>
<path d="M419,184 Q413,194 419,205" fill="none" stroke="#2a6a00" stroke-width="4" stroke-linecap="butt"/>
<path d="M419,184 Q413,194 419,205" fill="none" stroke="#5cc21c" stroke-width="2" stroke-linecap="butt"/>
<path d="M441,184 Q447,194 441,205" fill="none" stroke="#2a6a00" stroke-width="4" stroke-linecap="butt"/>
<path d="M441,184 Q447,194 441,205" fill="none" stroke="#5cc21c" stroke-width="2" stroke-linecap="butt"/>
<path d="M430,186 V201" fill="none" stroke="#2a6a00" stroke-width="4" stroke-linecap="butt"/>
<path d="M430,186 V201" fill="none" stroke="#5cc21c" stroke-width="2" stroke-linecap="butt"/>
<circle cx="419" cy="183" r="5.5" fill="#dd1111" stroke="#6a0000" stroke-width="1"/>
<circle cx="419" cy="206" r="5.5" fill="#dd1111" stroke="#6a0000" stroke-width="1"/>
<circle cx="441" cy="183" r="5.5" fill="#dd1111" stroke="#6a0000" stroke-width="1"/>
<circle cx="441" cy="206" r="5.5" fill="#dd1111" stroke="#6a0000" stroke-width="1"/>
<circle cx="430" cy="187" r="3.5" fill="#dd1111" stroke="#6a0000" stroke-width="1"/>
<circle cx="430" cy="202" r="3.5" fill="#dd1111" stroke="#6a0000" stroke-width="1"/>
<path d="M459,178 h8 v3 h-8z" fill="#dd1111" stroke="#5a0000" stroke-width="1"/>
<path d="M459,184 h8 v3 h-8z" fill="#dd1111" stroke="#5a0000" stroke-width="1"/>
<path d="M472,184 Q466,194 472,205" fill="none" stroke="#2a6a00" stroke-width="4" stroke-linecap="butt"/>
<path d="M472,184 Q466,194 472,205" fill="none" stroke="#5cc21c" stroke-width="2" stroke-linecap="butt"/>
<path d="M485,184 Q479,194 485,205" fill="none" stroke="#777" stroke-width="4"/><path d="M485,184 Q479,194 485,205" fill="none" stroke="#eee" stroke-width="2"/>
<circle cx="474" cy="183" r="5.5" fill="#dd1111" stroke="#6a0000" stroke-width="1"/>
<circle cx="474" cy="206" r="5.5" fill="#dd1111" stroke="#6a0000" stroke-width="1"/>
<circle cx="487" cy="183" r="5.5" fill="#dd1111" stroke="#6a0000" stroke-width="1"/>
<circle cx="487" cy="206" r="5.5" fill="#dd1111" stroke="#6a0000" stroke-width="1"/>
<path d="M503.5,190.5 h11 l-5.5,6z" fill="#000"/>
<path d="M527,193 V208" fill="none" stroke="#2a6a00" stroke-width="4" stroke-linecap="butt"/>
<path d="M527,193 V208" fill="none" stroke="#5cc21c" stroke-width="2" stroke-linecap="butt"/>
<circle cx="527" cy="192" r="3.5" fill="#dd1111" stroke="#6a0000" stroke-width="1"/>
<circle cx="527" cy="209" r="3.5" fill="#dd1111" stroke="#6a0000" stroke-width="1"/>
<path d="M536,189 V203" stroke="#777" stroke-width="5"/><path d="M536,189 V203" stroke="#eee" stroke-width="2.6"/>
<circle cx="536" cy="188" r="3.5" fill="#dd1111" stroke="#6a0000" stroke-width="1"/>
<circle cx="536" cy="204" r="3.5" fill="#dd1111" stroke="#6a0000" stroke-width="1"/>
<path d="M545,185 V198" stroke="#777" stroke-width="5"/><path d="M545,185 V198" stroke="#eee" stroke-width="2.6"/>
<circle cx="545" cy="184" r="3.5" fill="#dd1111" stroke="#6a0000" stroke-width="1"/>
<circle cx="545" cy="199" r="3.5" fill="#dd1111" stroke="#6a0000" stroke-width="1"/>
<path d="M554,181 V194" stroke="#777" stroke-width="5"/><path d="M554,181 V194" stroke="#eee" stroke-width="2.6"/>
<circle cx="554" cy="180" r="3.5" fill="#dd1111" stroke="#6a0000" stroke-width="1"/>
<circle cx="554" cy="195" r="3.5" fill="#dd1111" stroke="#6a0000" stroke-width="1"/>
<path d="M573,180 L590,197 M590,180 L573,197" fill="none" stroke="#5a0000" stroke-width="5" stroke-linecap="round"/>
<path d="M573,180 L590,197 M590,180 L573,197" fill="none" stroke="#dd1111" stroke-width="3" stroke-linecap="round"/>
<path d="M590,199 L601,189 M593,203 L603,195" fill="none" stroke="#2a6a00" stroke-width="2.6" stroke-linecap="butt"/>
<path d="M590,199 L601,189 M593,203 L603,195" fill="none" stroke="#5cc21c" stroke-width="0.6000000000000001" stroke-linecap="butt"/>
<path d="M586,203 L592,207 L586,211 M604,203 L598,207 L604,211" fill="none" stroke="#2a6a00" stroke-width="2.6" stroke-linecap="butt"/>
<path d="M586,203 L592,207 L586,211 M604,203 L598,207 L604,211" fill="none" stroke="#5cc21c" stroke-width="0.6000000000000001" stroke-linecap="butt"/>
<rect x="612.6" y="168" width="1" height="50" fill="#d0d0d0" />
<rect x="613.6" y="168" width="1" height="50" fill="#ffffff" />
<path d="M620,175h2v2h-2zM620,179h2v2h-2zM620,183h2v2h-2zM620,187h2v2h-2zM620,191h2v2h-2zM620,195h2v2h-2zM620,199h2v2h-2zM620,203h2v2h-2zM620,207h2v2h-2zM620,211h2v2h-2z" fill="#b4b4b4"/>
<path d="M640,181 L666,177 L664,204 L638,208Z" fill="#dcdcdc" stroke="#333" stroke-width="1"/>
<path d="M646,196 L656,185 L661,189 L651,200Z" fill="none" stroke="#fff" stroke-width="3"/>
<path d="M640,181 L666,177 L664,204 L638,208Z" fill="none" stroke="#2a6a00" stroke-width="4" stroke-linecap="butt"/>
<path d="M640,181 L666,177 L664,204 L638,208Z" fill="none" stroke="#5cc21c" stroke-width="2" stroke-linecap="butt"/>
<circle cx="640" cy="181" r="4.5" fill="#dd1111" stroke="#6a0000" stroke-width="1"/>
<circle cx="666" cy="177" r="4.5" fill="#dd1111" stroke="#6a0000" stroke-width="1"/>
<circle cx="664" cy="204" r="4.5" fill="#dd1111" stroke="#6a0000" stroke-width="1"/>
<circle cx="638" cy="208" r="4.5" fill="#dd1111" stroke="#6a0000" stroke-width="1"/>
<path d="M679,190.5 h11 l-5.5,6z" fill="#000"/>
<circle cx="716" cy="194" r="14" fill="none" stroke="#777" stroke-width="3.5" stroke-dasharray="6 4"/><circle cx="716" cy="194" r="14" fill="none" stroke="#f4f4f4" stroke-width="1.6" stroke-dasharray="6 4"/>
<circle cx="711" cy="180.5" r="3.8" fill="#dd1111" stroke="#6a0000" stroke-width="1"/>
<circle cx="722" cy="180" r="3.8" fill="#dd1111" stroke="#6a0000" stroke-width="1"/>
<circle cx="729" cy="186" r="3.8" fill="#dd1111" stroke="#6a0000" stroke-width="1"/>
<circle cx="729" cy="199" r="3.8" fill="#dd1111" stroke="#6a0000" stroke-width="1"/>
<path d="M755,180.5 V204.5 M766,180.5 V204.5 M748,188.5 H773 M748,198.5 H773" fill="none" stroke="#2a6a00" stroke-width="4" stroke-linecap="butt"/>
<path d="M755,180.5 V204.5 M766,180.5 V204.5 M748,188.5 H773 M748,198.5 H773" fill="none" stroke="#5cc21c" stroke-width="2" stroke-linecap="butt"/>
<path d="M751,177.5 h5 v6 h6 v5 h-6 v6 h-5 v-6 h-6 v-5 h6z" fill="#4f86c8" stroke="#1c3a6e" stroke-width="1"/>
<path d="M770,201.5 Q776,199.5 778,191.5" fill="none" stroke="#888" stroke-width="3"/>
<circle cx="759" cy="208.5" r="3.8" fill="#dd1111" stroke="#6a0000" stroke-width="1"/>
<circle cx="779" cy="190.5" r="3.8" fill="#dd1111" stroke="#6a0000" stroke-width="1"/>
<circle cx="779" cy="206.5" r="3.8" fill="#dd1111" stroke="#6a0000" stroke-width="1"/>
<path d="M801,180.5 V204.5 M812,180.5 V204.5 M794,188.5 H819 M794,198.5 H819" fill="none" stroke="#2a6a00" stroke-width="4" stroke-linecap="butt"/>
<path d="M801,180.5 V204.5 M812,180.5 V204.5 M794,188.5 H819 M794,198.5 H819" fill="none" stroke="#5cc21c" stroke-width="2" stroke-linecap="butt"/>
<path d="M792,184.5 h18 v5 h-18z" fill="#4f86c8" stroke="#1c3a6e" stroke-width="1"/>
<path d="M816,201.5 Q822,199.5 824,191.5" fill="none" stroke="#888" stroke-width="3"/>
<circle cx="805" cy="208.5" r="3.8" fill="#dd1111" stroke="#6a0000" stroke-width="1"/>
<circle cx="825" cy="190.5" r="3.8" fill="#dd1111" stroke="#6a0000" stroke-width="1"/>
<circle cx="825" cy="206.5" r="3.8" fill="#dd1111" stroke="#6a0000" stroke-width="1"/>
<path d="M848,180.5 V204.5 M859,180.5 V204.5 M841,188.5 H866 M841,198.5 H866" fill="none" stroke="#2a6a00" stroke-width="4" stroke-linecap="butt"/>
<path d="M848,180.5 V204.5 M859,180.5 V204.5 M841,188.5 H866 M841,198.5 H866" fill="none" stroke="#5cc21c" stroke-width="2" stroke-linecap="butt"/>
<path d="M844,177.5 h5 v6 h6 v5 h-6 v6 h-5 v-6 h-6 v-5 h6z" fill="#4f86c8" stroke="#1c3a6e" stroke-width="1"/>
<path d="M863,201.5 Q869,199.5 871,191.5" fill="none" stroke="#888" stroke-width="3"/>
<circle cx="852" cy="208.5" r="3.8" fill="#dd1111" stroke="#6a0000" stroke-width="1"/>
<circle cx="872" cy="190.5" r="3.8" fill="#dd1111" stroke="#6a0000" stroke-width="1"/>
<circle cx="872" cy="206.5" r="3.8" fill="#dd1111" stroke="#6a0000" stroke-width="1"/>
<path d="M883.5,190.5 h11 l-5.5,6z" fill="#000"/>
<rect x="0.5" y="221.5" width="420" height="27" fill="#d9d9d9" stroke="#c4c4c4" stroke-width="1" />
<line x1="20.5" y1="222.0" x2="20.5" y2="248.0" stroke="#c4c4c4" stroke-width="1" />
<clipPath id="cC"><rect x="0" y="222" width="20" height="27"/></clipPath>
<text x="7.7" y="243.8" font-family="Liberation Sans" font-size="18" fill="#000" text-anchor="start" clip-path="url(#cC)">C</text>
<text x="27.8" y="243.8" font-family="Liberation Sans" font-size="18" fill="#000" text-anchor="start" textLength="100.5" lengthAdjust="spacingAndGlyphs" >Combo View</text>
<rect x="403.5" y="229.5" width="9" height="8" fill="#fff" stroke="#333" stroke-width="1.6" />
<rect x="399.5" y="233.5" width="9" height="8" fill="#fff" stroke="#333" stroke-width="1.6" />
<rect x="3.5" y="256.5" width="17" height="32" fill="#f0f0f0" stroke="#d9d9d9" stroke-width="1" />
<clipPath id="cI"><rect x="3" y="256" width="17" height="32"/></clipPath>
<text x="17.0" y="278.7" font-family="Liberation Sans" font-size="18" fill="#000" text-anchor="start" clip-path="url(#cI)">I</text>
<rect x="23.5" y="256.5" width="74" height="32" fill="#f0f0f0" stroke="#d9d9d9" stroke-width="1" />
<text x="38.6" y="278.7" font-family="Liberation Sans" font-size="18" fill="#000" text-anchor="start" textLength="42.4" lengthAdjust="spacingAndGlyphs" >Model</text>
<rect x="97.5" y="253.5" width="110" height="36" fill="#ffffff" stroke="#d9d9d9" stroke-width="1" />
<rect x="98" y="285" width="109" height="6" fill="#ffffff" />
<g transform="translate(130,270) rotate(45)"><rect x="-14" y="-4" width="22" height="8" fill="#3a64a8" stroke="#203c70" stroke-width="1"/><path d="M8,-4 L15,0 L8,4 Z" fill="#eee" stroke="#203c70" stroke-width="1"/><path d="M12.5,-1.5 L15,0 L12.5,1.5Z" fill="#111"/></g>
<text x="147.8" y="278.7" font-family="Liberation Sans" font-size="18" fill="#000" text-anchor="start" textLength="41.6" lengthAdjust="spacingAndGlyphs" >Tasks</text>
<rect x="0.5" y="288.5" width="20" height="685" fill="#ffffff" stroke="#dcdcdc" stroke-width="1" />
<rect x="20.5" y="288.5" width="398" height="685" fill="#ffffff" stroke="#dcdcdc" stroke-width="1" />
<defs><linearGradient id="gp" x1="0" y1="0" x2="0" y2="1"><stop offset="0" stop-color="#aaabc2"/><stop offset="1" stop-color="#323264"/></linearGradient><linearGradient id="gv" x1="0" y1="0" x2="0" y2="1"><stop offset="0" stop-color="#343466"/><stop offset="1" stop-color="#a9a9c0"/></linearGradient><linearGradient id="gh" x1="0" y1="0" x2="1" y2="0"><stop offset="0" stop-color="#ffffff"/><stop offset="1" stop-color="#c6d2f4"/></linearGradient></defs>
<rect x="3" y="292" width="1.2" height="676" fill="#70747c" />
<rect x="4.2" y="292" width="0.8" height="676" fill="#b8b8c4" />
<rect x="5" y="292" width="15" height="676" fill="url(#gp)" />
<rect x="17" y="378" width="3" height="229" fill="#d6def6" />
<rect x="17" y="378" width="3" height="37" fill="#ffffff" />
<rect x="17" y="619" width="3" height="349" fill="#d6def6" />
<rect x="17" y="619" width="3" height="37" fill="#ffffff" />
<rect x="23.5" y="292" width="1.2" height="676" fill="#70747c" />
<rect x="25" y="292" width="364" height="676" fill="url(#gp)" />
<rect x="390" y="292" width="24" height="676" fill="#f0f0f0" />
<rect x="390" y="318" width="24" height="229" fill="#cdcdcd" />
<path d="M397,312 L402,306 L407,312" fill="none" stroke="#555" stroke-width="2.4"/>
<path d="M397,952 L402,958 L407,952" fill="none" stroke="#555" stroke-width="2.4"/>
<rect x="415" y="292" width="1" height="676" fill="#7a7f88" />
<rect x="3" y="968" width="413" height="1" fill="#6a6a70" />
<rect x="0" y="969" width="428" height="6" fill="#f0f0f0" />
<rect x="0.5" y="969.5" width="20" height="4" fill="#ffffff" stroke="#dcdcdc" stroke-width="1" />
<rect x="20.5" y="969.5" width="398" height="4" fill="#ffffff" stroke="#dcdcdc" stroke-width="1" />
<rect x="152.5" y="319.5" width="108" height="31" fill="#e1e1e1" stroke="#adadad" stroke-width="1" />
<text x="206.5" y="342.0" font-family="Liberation Sans" font-size="16" fill="#000" text-anchor="middle" textLength="39.0" lengthAdjust="spacingAndGlyphs" >Close</text>
<clipPath id="cb378"><rect x="37" y="378" width="340" height="590"/></clipPath>
<g clip-path="url(#cb378)">
<path d="M37.5,607 V384 Q37.5,378.5 43,378.5 H371 Q376.5,378.5 376.5,384 V607" fill="#d6def6" stroke="#ffffff" stroke-width="1.2"/>
<path d="M38,414 V384 Q38,379 43,379 H371 Q376,379 376,384 V414Z" fill="url(#gh)"/>
<line x1="38.0" y1="414.5" x2="376.0" y2="414.5" stroke="#ffffff" stroke-width="1.5" />
</g>
<rect x="48.5" y="385.5" width="17" height="21" fill="#f4f4f4" stroke="#b0b0b0" stroke-width="1" />
<circle cx="64" cy="387" r="3" fill="#f2e23a"/>
<text x="72.4" y="403.0" font-family="Liberation Sans" font-size="17" fill="#2a5bc8" text-anchor="start" font-weight="bold" textLength="138.2" lengthAdjust="spacingAndGlyphs" >Solver messages</text>
<circle cx="360" cy="396.4" r="10.5" fill="#f8f8fc" stroke="#b8c0d8" stroke-width="1"/>
<path d="M355.5,397.4 L360,392.9 L364.5,397.4 M355.5,401.9 L360,397.4 L364.5,401.9" fill="none" stroke="#1a3a9a" stroke-width="1.8"/>
<text x="57.7" y="450.9" font-family="Liberation Sans" font-size="16" fill="#000" text-anchor="start" textLength="221.0" lengthAdjust="spacingAndGlyphs" >Under-constrained sketch with</text>
<rect x="283" y="437" width="73" height="16" fill="#ffffff" />
<text x="283.4" y="450.9" font-family="Liberation Sans" font-size="16" fill="#0000ee" text-anchor="start" textLength="71.9" lengthAdjust="spacingAndGlyphs" >2 degrees</text>
<line x1="283.4" y1="453.5" x2="355.3" y2="453.5" stroke="#0000ee" stroke-width="1" />
<text x="57.7" y="471.9" font-family="Liberation Sans" font-size="16" fill="#000" text-anchor="start" textLength="83.8" lengthAdjust="spacingAndGlyphs" >of freedom.</text>
<rect x="57.7" y="486" width="109" height="20.8" fill="#e2e6e2" />
<text x="57.7" y="502.0" font-family="Liberation Sans" font-size="16" fill="#008000" text-anchor="start" textLength="109.0" lengthAdjust="spacingAndGlyphs" >Solved in 0 sec</text>
<rect x="58.2" y="519.5" width="18" height="18" fill="#ffffff" stroke="#333333" stroke-width="1" />
<text x="84.9" y="535.6" font-family="Liberation Sans" font-size="16" fill="#000" text-anchor="start" textLength="179.9" lengthAdjust="spacingAndGlyphs" >Auto remove redundants</text>
<rect x="58.2" y="558.7" width="18" height="18" fill="#ffffff" stroke="#333333" stroke-width="1" />
<text x="84.9" y="574.7" font-family="Liberation Sans" font-size="16" fill="#000" text-anchor="start" textLength="88.4" lengthAdjust="spacingAndGlyphs" >Auto update</text>
<rect x="213.5" y="553.5" width="141" height="31" fill="#e1e1e1" stroke="#adadad" stroke-width="1" />
<text x="284.0" y="574.7" font-family="Liberation Sans" font-size="16" fill="#000" text-anchor="middle" textLength="51.0" lengthAdjust="spacingAndGlyphs" >Update</text>
<clipPath id="cb619"><rect x="37" y="619" width="340" height="349"/></clipPath>
<g clip-path="url(#cb619)">
<path d="M37.5,979 V625 Q37.5,619.5 43,619.5 H371 Q376.5,619.5 376.5,625 V979" fill="#d6def6" stroke="#ffffff" stroke-width="1.2"/>
<path d="M38,655 V625 Q38,620 43,620 H371 Q376,620 376,625 V655Z" fill="url(#gh)"/>
<line x1="38.0" y1="655.5" x2="376.0" y2="655.5" stroke="#ffffff" stroke-width="1.5" />
</g>
<rect x="48.5" y="626.5" width="17" height="21" fill="#f4f4f4" stroke="#b0b0b0" stroke-width="1" />
<circle cx="64" cy="628" r="3" fill="#f2e23a"/>
<text x="73.0" y="644.0" font-family="Liberation Sans" font-size="17" fill="#2a5bc8" text-anchor="start" font-weight="bold" textLength="104.0" lengthAdjust="spacingAndGlyphs" >Edit controls</text>
<circle cx="360" cy="637.6" r="10.5" fill="#f8f8fc" stroke="#b8c0d8" stroke-width="1"/>
<path d="M355.5,638.6 L360,634.1 L364.5,638.6 M355.5,643.1 L360,638.6 L364.5,643.1" fill="none" stroke="#1a3a9a" stroke-width="1.8"/>
<rect x="58.1" y="681.1" width="18" height="18" fill="#ffffff" stroke="#333333" stroke-width="1" />
<path d="M61.6,690.1 L65.1,693.6 L72.1,686.1" fill="none" stroke="#222" stroke-width="1.3"/>
<text x="84.5" y="696.0" font-family="Liberation Sans" font-size="16" fill="#000" text-anchor="start" textLength="72.5" lengthAdjust="spacingAndGlyphs" >Show grid</text>
<text x="57.7" y="734.8" font-family="Liberation Sans" font-size="16" fill="#000" text-anchor="start" textLength="66.3" lengthAdjust="spacingAndGlyphs" >Grid size:</text>
<rect x="212.5" y="712.5" width="143" height="33" fill="#ffffff" stroke="#a0a0a0" stroke-width="1" />
<text x="217.2" y="735.0" font-family="Liberation Sans" font-size="16" fill="#000" text-anchor="start" textLength="73.5" lengthAdjust="spacingAndGlyphs" >10.00 mm</text>
<rect x="332.5" y="714.5" width="21" height="14" fill="#f0f0f0" stroke="#c8c8c8" stroke-width="1" />
<rect x="332.5" y="729.5" width="21" height="14" fill="#f0f0f0" stroke="#c8c8c8" stroke-width="1" />
<path d="M338,725 L343,719 L348,725Z" fill="#000"/><path d="M338,734 L343,740 L348,734Z" fill="#000"/>
<rect x="58.1" y="758.2" width="18" height="18" fill="#ffffff" stroke="#333333" stroke-width="1" />
<path d="M61.6,767.2 L65.1,770.7 L72.1,763.2" fill="none" stroke="#222" stroke-width="1.3"/>
<text x="84.5" y="774.2" font-family="Liberation Sans" font-size="16" fill="#000" text-anchor="start" textLength="68.9" lengthAdjust="spacingAndGlyphs" >Grid snap</text>
<rect x="58.1" y="794.1" width="18" height="18" fill="#ffffff" stroke="#333333" stroke-width="1" />
<path d="M61.6,803.1 L65.1,806.6 L72.1,799.1" fill="none" stroke="#222" stroke-width="1.3"/>
<text x="84.5" y="809.7" font-family="Liberation Sans" font-size="16" fill="#000" text-anchor="start" textLength="117.6" lengthAdjust="spacingAndGlyphs" >Auto constraints</text>
<rect x="58.1" y="829.9" width="18" height="18" fill="#ffffff" stroke="#333333" stroke-width="1" />
<path d="M61.6,838.9 L65.1,842.4 L72.1,834.9" fill="none" stroke="#222" stroke-width="1.3"/>
<text x="84.5" y="845.6" font-family="Liberation Sans" font-size="16" fill="#000" text-anchor="start" textLength="241.0" lengthAdjust="spacingAndGlyphs" >Avoid redundant auto constraints</text>
<text x="57.7" y="878.9" font-family="Liberation Sans" font-size="16" fill="#000" text-anchor="start" textLength="183.5" lengthAdjust="spacingAndGlyphs" >Rendering order (global):</text>
<clipPath id="cL"><rect x="57" y="892" width="300" height="76"/></clipPath>
<g clip-path="url(#cL)">
<rect x="57.5" y="892.5" width="298" height="90" fill="#ffffff" stroke="#a0a0a0" stroke-width="1" />
<text x="64.8" y="915.8" font-family="Liberation Sans" font-size="16" fill="#000" text-anchor="start" textLength="142.4" lengthAdjust="spacingAndGlyphs" >Normal Geometry</text>
<text x="64.8" y="942.7" font-family="Liberation Sans" font-size="16" fill="#000" text-anchor="start" textLength="184.0" lengthAdjust="spacingAndGlyphs" >Construction Geometry</text>
<text x="64.8" y="968.5" font-family="Liberation Sans" font-size="16" fill="#000" text-anchor="start" textLength="145.9" lengthAdjust="spacingAndGlyphs" >External Geometry</text>
</g>
<clipPath id="cV"><rect x="428" y="220" width="1510" height="721"/></clipPath>
<g clip-path="url(#cV)">
<rect x="428" y="220" width="1510" height="721" fill="url(#gv)" />
<line x1="496.0" y1="761.0" x2="1789.0" y2="761.0" stroke="#d86060" stroke-width="2" />
<path d="M489.5,224 V941 M533.5,224 V941 M576.5,224 V941 M620.5,224 V941 M663.5,224 V941 M707.5,224 V941 M750.5,224 V941 M794.5,224 V941 M837.5,224 V941 M881.5,224 V941 M925.5,224 V941 M968.5,224 V941 M1012.5,224 V941 M1055.5,224 V941 M1099.5,224 V941 M1142.5,224 V941 M1186.5,224 V941 M1229.5,224 V941 M1273.5,224 V941 M1316.5,224 V941 M1360.5,224 V941 M1404.5,224 V941 M1447.5,224 V941 M1491.5,224 V941 M1534.5,224 V941 M1578.5,224 V941 M1621.5,224 V941 M1665.5,224 V941 M1708.5,224 V941 M1752.5,224 V941 M1796.5,224 V941" stroke="#c6c6be" stroke-width="1" stroke-dasharray="4 4" fill="none"/>
<path d="M468,238.5 H1816 M468,281.5 H1816 M468,325.5 H1816 M468,368.5 H1816 M468,412.5 H1816 M468,455.5 H1816 M468,499.5 H1816 M468,543.5 H1816 M468,586.5 H1816 M468,630.5 H1816 M468,673.5 H1816 M468,717.5 H1816 M468,760.5 H1816 M468,804.5 H1816 M468,847.5 H1816 M468,891.5 H1816 M468,935.5 H1816" stroke="#c6c6be" stroke-width="1" stroke-dasharray="4 4" fill="none"/>
<line x1="1143.0" y1="220.0" x2="1143.0" y2="940.0" stroke="#80f080" stroke-width="2" />
<polyline points="1240.1,273.6 1568.2,462.0 1504.5,702.4 1357.1,742.3 1234.2,865.2 823.8,865.2 701.8,790.8 641.4,567.8 998.2,663.6 1052.6,461.0 1240.1,273.6" fill="none" stroke="#7dcd96" stroke-width="3" stroke-linejoin="round"/>
<circle cx="825" cy="760.6" r="33.2" fill="none" stroke="#7dcd96" stroke-width="3"/>
<circle cx="1142.8" cy="760.6" r="37.8" fill="none" stroke="#7dcd96" stroke-width="3"/>
<line x1="1142.8" y1="760.6" x2="1392.4" y2="511.6" stroke="#8ca6ff" stroke-width="2.6" />
<line x1="998.2" y1="663.6" x2="1017.3" y2="596.0" stroke="#ff1a00" stroke-width="2" />
<line x1="998.2" y1="663.6" x2="932.0" y2="646.0" stroke="#ff1a00" stroke-width="2" />
<line x1="823.8" y1="760.6" x2="892.4" y2="760.6" stroke="#ff1a00" stroke-width="2.4" />
<line x1="823.8" y1="865.2" x2="892.4" y2="865.2" stroke="#ff1a00" stroke-width="2.4" />
<line x1="1052.6" y1="461.0" x2="1006.7" y2="415.0" stroke="#ff1a00" stroke-width="1.6" />
<line x1="1240.1" y1="273.6" x2="1194.2" y2="227.6" stroke="#ff1a00" stroke-width="1.6" />
<line x1="1020.8" y1="429.2" x2="1096.3" y2="353.7" stroke="#ff1a00" stroke-width="2" />
<line x1="1140.1" y1="309.9" x2="1208.3" y2="241.8" stroke="#ff1a00" stroke-width="2" />
<path d="M1020.8,429.2 L1026.8,416.8 L1033.2,423.2Z" fill="#ff1a00"/>
<path d="M1208.3,241.8 L1202.3,254.1 L1195.9,247.8Z" fill="#ff1a00"/>
<text transform="translate(1118.2,331.8) rotate(-45.0)" x="0" y="6" font-family="Liberation Sans" font-size="17" fill="#cf3420" stroke="#7a2c3a" stroke-width="0.7" paint-order="stroke" text-anchor="middle">61 mm</text>
<line x1="1240.1" y1="273.6" x2="1277.2" y2="209.0" stroke="#ff1a00" stroke-width="1.6" />
<line x1="1568.2" y1="462.0" x2="1605.3" y2="397.4" stroke="#ff1a00" stroke-width="1.6" />
<line x1="1267.2" y1="226.3" x2="1418.0" y2="312.9" stroke="#ff1a00" stroke-width="2" />
<line x1="1471.8" y1="343.8" x2="1595.3" y2="414.7" stroke="#ff1a00" stroke-width="2" />
<path d="M1267.2,226.3 L1280.8,228.9 L1276.3,236.7Z" fill="#ff1a00"/>
<path d="M1595.3,414.7 L1581.8,412.2 L1586.3,404.4Z" fill="#ff1a00"/>
<text transform="translate(1444.9,328.4) rotate(29.9)" x="0" y="6" font-family="Liberation Sans" font-size="17" fill="#cf3420" stroke="#7a2c3a" stroke-width="0.7" paint-order="stroke" text-anchor="middle">87 mm</text>
<line x1="1568.2" y1="462.0" x2="1633.0" y2="479.2" stroke="#ff1a00" stroke-width="1.6" />
<line x1="1504.5" y1="702.4" x2="1569.3" y2="719.6" stroke="#ff1a00" stroke-width="1.6" />
<line x1="1613.6" y1="474.0" x2="1588.2" y2="570.2" stroke="#ff1a00" stroke-width="2" />
<line x1="1572.3" y1="630.1" x2="1549.9" y2="714.4" stroke="#ff1a00" stroke-width="2" />
<path d="M1613.6,474.0 L1614.7,487.8 L1606.0,485.5Z" fill="#ff1a00"/>
<path d="M1549.9,714.4 L1548.9,700.7 L1557.6,703.0Z" fill="#ff1a00"/>
<text transform="translate(1580.2,600.1) rotate(-75.2)" x="0" y="6" font-family="Liberation Sans" font-size="17" fill="#cf3420" stroke="#7a2c3a" stroke-width="0.7" paint-order="stroke" text-anchor="middle">57 mm</text>
<line x1="1504.5" y1="702.4" x2="1490.7" y2="651.2" stroke="#ff1a00" stroke-width="1.6" />
<line x1="1357.1" y1="742.3" x2="1343.3" y2="691.1" stroke="#ff1a00" stroke-width="1.6" />
<line x1="1495.9" y1="670.5" x2="1434.6" y2="687.1" stroke="#ff1a00" stroke-width="2" />
<line x1="1374.7" y1="703.3" x2="1348.5" y2="710.4" stroke="#ff1a00" stroke-width="2" />
<path d="M1495.9,670.5 L1484.5,678.3 L1482.2,669.6Z" fill="#ff1a00"/>
<path d="M1348.5,710.4 L1359.9,702.7 L1362.2,711.4Z" fill="#ff1a00"/>
<text transform="translate(1404.7,695.2) rotate(-15.1)" x="0" y="6" font-family="Liberation Sans" font-size="17" fill="#cf3420" stroke="#7a2c3a" stroke-width="0.7" paint-order="stroke" text-anchor="middle">35 mm</text>
<line x1="1357.1" y1="742.3" x2="1403.4" y2="788.6" stroke="#ff1a00" stroke-width="1.6" />
<line x1="1234.2" y1="865.2" x2="1280.5" y2="911.5" stroke="#ff1a00" stroke-width="1.6" />
<line x1="1389.3" y1="774.5" x2="1359.2" y2="804.6" stroke="#ff1a00" stroke-width="2" />
<line x1="1315.4" y1="848.4" x2="1266.4" y2="897.4" stroke="#ff1a00" stroke-width="2" />
<path d="M1389.3,774.5 L1383.3,786.8 L1376.9,780.5Z" fill="#ff1a00"/>
<path d="M1266.4,897.4 L1272.4,885.0 L1278.7,891.4Z" fill="#ff1a00"/>
<text transform="translate(1337.3,826.5) rotate(-45.0)" x="0" y="6" font-family="Liberation Sans" font-size="17" fill="#cf3420" stroke="#7a2c3a" stroke-width="0.7" paint-order="stroke" text-anchor="middle">40 mm</text>
<line x1="641.4" y1="567.8" x2="658.8" y2="503.1" stroke="#ff1a00" stroke-width="1.6" />
<line x1="998.2" y1="663.6" x2="1015.6" y2="598.9" stroke="#ff1a00" stroke-width="1.6" />
<line x1="653.6" y1="522.4" x2="787.6" y2="558.4" stroke="#ff1a00" stroke-width="2" />
<line x1="847.5" y1="574.5" x2="1010.4" y2="618.2" stroke="#ff1a00" stroke-width="2" />
<path d="M653.6,522.4 L667.3,521.4 L665.0,530.1Z" fill="#ff1a00"/>
<path d="M1010.4,618.2 L996.7,619.2 L999.0,610.5Z" fill="#ff1a00"/>
<text transform="translate(817.6,566.4) rotate(15.0)" x="0" y="6" font-family="Liberation Sans" font-size="17" fill="#cf3420" stroke="#7a2c3a" stroke-width="0.7" paint-order="stroke" text-anchor="middle">85 mm</text>
<line x1="641.4" y1="567.8" x2="574.3" y2="586.0" stroke="#ff1a00" stroke-width="1.6" />
<line x1="701.8" y1="790.8" x2="634.7" y2="809.0" stroke="#ff1a00" stroke-width="1.6" />
<line x1="593.6" y1="580.7" x2="611.5" y2="646.6" stroke="#ff1a00" stroke-width="2" />
<line x1="627.7" y1="706.5" x2="654.0" y2="803.7" stroke="#ff1a00" stroke-width="2" />
<path d="M593.6,580.7 L601.4,592.1 L592.7,594.5Z" fill="#ff1a00"/>
<path d="M654.0,803.7 L646.3,792.4 L655.0,790.0Z" fill="#ff1a00"/>
<text transform="translate(619.6,676.6) rotate(254.8)" x="0" y="6" font-family="Liberation Sans" font-size="17" fill="#cf3420" stroke="#7a2c3a" stroke-width="0.7" paint-order="stroke" text-anchor="middle">53 mm</text>
<line x1="998.2" y1="663.6" x2="933.5" y2="646.2" stroke="#ff1a00" stroke-width="1.6" />
<line x1="1052.6" y1="461.0" x2="987.9" y2="443.6" stroke="#ff1a00" stroke-width="1.6" />
<line x1="952.8" y1="651.4" x2="974.7" y2="570.0" stroke="#ff1a00" stroke-width="2" />
<line x1="990.7" y1="510.2" x2="1007.2" y2="448.8" stroke="#ff1a00" stroke-width="2" />
<path d="M952.8,651.4 L951.8,637.7 L960.5,640.0Z" fill="#ff1a00"/>
<path d="M1007.2,448.8 L1008.2,462.5 L999.5,460.2Z" fill="#ff1a00"/>
<text transform="translate(982.7,540.1) rotate(-75.0)" x="0" y="6" font-family="Liberation Sans" font-size="17" fill="#cf3420" stroke="#7a2c3a" stroke-width="0.7" paint-order="stroke" text-anchor="middle">48 mm</text>
<line x1="1142.8" y1="760.6" x2="1071.0" y2="688.6" stroke="#ff1a00" stroke-width="1.6" />
<line x1="1392.4" y1="511.6" x2="1320.6" y2="439.6" stroke="#ff1a00" stroke-width="1.6" />
<line x1="1085.1" y1="702.8" x2="1207.8" y2="580.3" stroke="#ff1a00" stroke-width="2" />
<line x1="1251.7" y1="536.6" x2="1334.7" y2="453.8" stroke="#ff1a00" stroke-width="2" />
<path d="M1085.1,702.8 L1091.1,690.4 L1097.5,696.8Z" fill="#ff1a00"/>
<path d="M1334.7,453.8 L1328.7,466.1 L1322.3,459.8Z" fill="#ff1a00"/>
<text transform="translate(1229.8,558.5) rotate(-44.9)" x="0" y="6" font-family="Liberation Sans" font-size="17" fill="#cf3420" stroke="#7a2c3a" stroke-width="0.7" paint-order="stroke" text-anchor="middle">81 mm</text>
<line x1="1426.4" y1="535.2" x2="1470.5" y2="566.4" stroke="#ff1a00" stroke-width="1.6" />
<line x1="1366.4" y1="620.1" x2="1410.5" y2="651.3" stroke="#ff1a00" stroke-width="1.6" />
<line x1="1454.2" y1="554.8" x2="1440.5" y2="574.2" stroke="#ff1a00" stroke-width="2" />
<line x1="1404.7" y1="624.8" x2="1394.2" y2="639.7" stroke="#ff1a00" stroke-width="2" />
<path d="M1454.2,554.8 L1450.3,568.0 L1443.0,562.8Z" fill="#ff1a00"/>
<path d="M1394.2,639.7 L1398.0,626.5 L1405.3,631.7Z" fill="#ff1a00"/>
<text transform="translate(1422.6,599.5) rotate(-54.8)" x="0" y="6" font-family="Liberation Sans" font-size="17" fill="#cf3420" stroke="#7a2c3a" stroke-width="0.7" paint-order="stroke" text-anchor="middle">24 mm</text>
<line x1="823.8" y1="760.6" x2="823.8" y2="940.0" stroke="#ff1a00" stroke-width="2.4" />
<line x1="1234.2" y1="865.2" x2="1234.2" y2="940.0" stroke="#ff1a00" stroke-width="2.4" />
<line x1="1142.8" y1="760.6" x2="1142.8" y2="912.6" stroke="#ff1a00" stroke-width="2.4" />
<line x1="823.8" y1="891.8" x2="936.8" y2="891.8" stroke="#ff1a00" stroke-width="2.6" />
<line x1="1000.0" y1="891.8" x2="1142.8" y2="891.8" stroke="#ff1a00" stroke-width="2.6" />
<path d="M825.0,891.8 L838.0,887.3 L838.0,896.3Z" fill="#ff1a00"/>
<path d="M1141.5,891.8 L1128.5,896.3 L1128.5,887.3Z" fill="#ff1a00"/>
<text x="968.7" y="897.8" font-family="Liberation Sans" font-size="17" fill="#cf3420" stroke="#7a2c3a" stroke-width="0.7" paint-order="stroke" text-anchor="middle" textLength="51" lengthAdjust="spacingAndGlyphs">73 mm</text>
<line x1="823.8" y1="924.2" x2="936.8" y2="924.2" stroke="#ff1a00" stroke-width="2.6" />
<line x1="1000.0" y1="924.2" x2="1234.2" y2="924.2" stroke="#ff1a00" stroke-width="2.6" />
<path d="M825.0,924.2 L838.0,919.7 L838.0,928.7Z" fill="#ff1a00"/>
<path d="M1233.0,924.2 L1220.0,928.7 L1220.0,919.7Z" fill="#ff1a00"/>
<text x="968.7" y="930.2" font-family="Liberation Sans" font-size="17" fill="#cf3420" stroke="#7a2c3a" stroke-width="0.7" paint-order="stroke" text-anchor="middle" textLength="51" lengthAdjust="spacingAndGlyphs">94 mm</text>
<line x1="872.3" y1="762.0" x2="872.3" y2="787.0" stroke="#ff1a00" stroke-width="2.4" />
<line x1="872.3" y1="848.0" x2="872.3" y2="864.0" stroke="#ff1a00" stroke-width="2.4" />
<path d="M872.3,761.5 L876.8,774.5 L867.8,774.5Z" fill="#ff1a00"/>
<path d="M872.3,864.5 L867.8,851.5 L876.8,851.5Z" fill="#ff1a00"/>
<text transform="translate(873.1,816.8) rotate(-90.0)" x="0" y="6" font-family="Liberation Sans" font-size="17" fill="#cf3420" stroke="#7a2c3a" stroke-width="0.7" paint-order="stroke" text-anchor="middle" textLength="51" lengthAdjust="spacingAndGlyphs">24 mm</text>
<line x1="800.2" y1="781.0" x2="849.8" y2="739.8" stroke="#ff1a00" stroke-width="2" />
<path d="M800.2,781.0 L806.1,770.9 L811.2,777.0Z" fill="#ff1a00"/>
<path d="M849.8,739.8 L843.9,749.9 L838.8,743.8Z" fill="#ff1a00"/>
<text transform="translate(880.0,719.1) rotate(-40.0)" x="0" y="6" font-family="Liberation Sans" font-size="17" fill="#cf3420" stroke="#7a2c3a" stroke-width="0.7" paint-order="stroke" text-anchor="middle" textLength="62" lengthAdjust="spacingAndGlyphs">⌀15 mm</text>
<line x1="1087.7" y1="733.7" x2="1178.0" y2="775.0" stroke="#ff1a00" stroke-width="2" />
<path d="M1108.0,744.0 L1119.7,744.9 L1116.3,752.2Z" fill="#ff1a00"/>
<path d="M1176.0,774.5 L1164.3,773.6 L1167.7,766.3Z" fill="#ff1a00"/>
<text transform="translate(1054.7,720.5) rotate(30.0)" x="0" y="6" font-family="Liberation Sans" font-size="17" fill="#cf3420" stroke="#7a2c3a" stroke-width="0.7" paint-order="stroke" text-anchor="middle" textLength="62" lengthAdjust="spacingAndGlyphs">⌀17 mm</text>
<mask id="m1249_378" maskUnits="userSpaceOnUse" x="428" y="220" width="1510" height="720"><rect x="428" y="220" width="1510" height="720" fill="#fff"/><rect x="1228.5" y="370.9" width="41" height="15" fill="#000"/></mask>
<g mask="url(#m1249_378)">
<path d="M1331.0,326.1 A105,105 0 0 1 1165.9,347.8" fill="none" stroke="#ff1a00" stroke-width="2"/>
<line x1="1331.0" y1="326.1" x2="1331.0" y2="326.1" stroke="#ff1a00" stroke-width="1" />
<line x1="1165.9" y1="347.8" x2="1165.9" y2="347.8" stroke="#ff1a00" stroke-width="1" />
</g>
<line x1="1326.7" y1="323.6" x2="1335.4" y2="328.6" stroke="#ff1a00" stroke-width="1.6" />
<line x1="1169.4" y1="344.3" x2="1162.3" y2="351.4" stroke="#ff1a00" stroke-width="1.6" />
<text x="1249.0" y="384.4" font-family="Liberation Sans" font-size="17" fill="#cf3420" stroke="#7a2c3a" stroke-width="0.7" paint-order="stroke" text-anchor="middle">105 °</text>
<mask id="m1145_514" maskUnits="userSpaceOnUse" x="428" y="220" width="1510" height="720"><rect x="428" y="220" width="1510" height="720" fill="#fff"/><rect x="1124.7" y="506.6" width="41" height="15" fill="#000"/></mask>
<g mask="url(#m1145_514)">
<path d="M1127.6,386.0 A106,106 0 0 1 1025.2,563.4" fill="none" stroke="#ff1a00" stroke-width="2"/>
<line x1="1127.6" y1="386.0" x2="1127.6" y2="386.0" stroke="#ff1a00" stroke-width="1" />
<line x1="1025.2" y1="563.4" x2="1025.2" y2="563.4" stroke="#ff1a00" stroke-width="1" />
</g>
<line x1="1124.0" y1="389.6" x2="1131.1" y2="382.5" stroke="#ff1a00" stroke-width="1.6" />
<line x1="1026.5" y1="558.6" x2="1023.9" y2="568.2" stroke="#ff1a00" stroke-width="1.6" />
<text x="1145.2" y="520.1" font-family="Liberation Sans" font-size="17" fill="#cf3420" stroke="#7a2c3a" stroke-width="0.7" paint-order="stroke" text-anchor="middle">150 °</text>
<mask id="m943_571" maskUnits="userSpaceOnUse" x="428" y="220" width="1510" height="720"><rect x="428" y="220" width="1510" height="720" fill="#fff"/><rect x="927.4" y="564.1" width="32" height="15" fill="#000"/></mask>
<g mask="url(#m943_571)">
<path d="M896.8,636.4 A105,105 0 0 1 1025.4,562.2" fill="none" stroke="#ff1a00" stroke-width="2"/>
<line x1="896.8" y1="636.4" x2="896.8" y2="636.4" stroke="#ff1a00" stroke-width="1" />
<line x1="1025.4" y1="562.2" x2="1025.4" y2="562.2" stroke="#ff1a00" stroke-width="1" />
</g>
<line x1="901.6" y1="637.7" x2="891.9" y2="635.1" stroke="#ff1a00" stroke-width="1.6" />
<line x1="1024.1" y1="567.0" x2="1026.7" y2="557.3" stroke="#ff1a00" stroke-width="1.6" />
<text x="943.4" y="577.6" font-family="Liberation Sans" font-size="17" fill="#cf3420" stroke="#7a2c3a" stroke-width="0.7" paint-order="stroke" text-anchor="middle">90 °</text>
<mask id="m713_642" maskUnits="userSpaceOnUse" x="428" y="220" width="1510" height="720"><rect x="428" y="220" width="1510" height="720" fill="#fff"/><rect x="697.3" y="634.6" width="32" height="15" fill="#000"/></mask>
<g mask="url(#m713_642)">
<path d="M743.8,595.2 A106,106 0 0 1 668.8,670.2" fill="none" stroke="#ff1a00" stroke-width="2"/>
<line x1="743.8" y1="595.2" x2="743.8" y2="595.2" stroke="#ff1a00" stroke-width="1" />
<line x1="668.8" y1="670.2" x2="668.8" y2="670.2" stroke="#ff1a00" stroke-width="1" />
</g>
<line x1="739.0" y1="593.9" x2="748.6" y2="596.5" stroke="#ff1a00" stroke-width="1.6" />
<line x1="667.5" y1="665.4" x2="670.1" y2="675.0" stroke="#ff1a00" stroke-width="1.6" />
<text x="713.3" y="648.1" font-family="Liberation Sans" font-size="17" fill="#cf3420" stroke="#7a2c3a" stroke-width="0.7" paint-order="stroke" text-anchor="middle">60 °</text>
<mask id="m1521_482" maskUnits="userSpaceOnUse" x="428" y="220" width="1510" height="720"><rect x="428" y="220" width="1510" height="720" fill="#fff"/><rect x="1501.3" y="475.1" width="41" height="15" fill="#000"/></mask>
<g mask="url(#m1521_482)">
<path d="M1555.3,510.3 A50,50 0 0 1 1524.9,437.0" fill="none" stroke="#ff1a00" stroke-width="2"/>
<line x1="1555.3" y1="510.3" x2="1555.3" y2="510.3" stroke="#ff1a00" stroke-width="1" />
<line x1="1524.9" y1="437.0" x2="1524.9" y2="437.0" stroke="#ff1a00" stroke-width="1" />
</g>
<line x1="1556.6" y1="505.5" x2="1554.0" y2="515.1" stroke="#ff1a00" stroke-width="1.6" />
<line x1="1529.2" y1="439.5" x2="1520.6" y2="434.5" stroke="#ff1a00" stroke-width="1.6" />
<text x="1521.8" y="488.6" font-family="Liberation Sans" font-size="17" fill="#cf3420" stroke="#7a2c3a" stroke-width="0.7" paint-order="stroke" text-anchor="middle">105 °</text>
<mask id="m1455_653" maskUnits="userSpaceOnUse" x="428" y="220" width="1510" height="720"><rect x="428" y="220" width="1510" height="720" fill="#fff"/><rect x="1434.6" y="646.2" width="41" height="15" fill="#000"/></mask>
<g mask="url(#m1455_653)">
<path d="M1436.9,720.5 A70,70 0 0 1 1522.6,634.8" fill="none" stroke="#ff1a00" stroke-width="2"/>
<line x1="1436.9" y1="720.5" x2="1436.9" y2="720.5" stroke="#ff1a00" stroke-width="1" />
<line x1="1522.6" y1="634.8" x2="1522.6" y2="634.8" stroke="#ff1a00" stroke-width="1" />
</g>
<line x1="1441.7" y1="719.2" x2="1432.1" y2="721.8" stroke="#ff1a00" stroke-width="1.6" />
<line x1="1521.3" y1="639.6" x2="1523.9" y2="630.0" stroke="#ff1a00" stroke-width="1.6" />
<text x="1455.1" y="659.7" font-family="Liberation Sans" font-size="17" fill="#cf3420" stroke="#7a2c3a" stroke-width="0.7" paint-order="stroke" text-anchor="middle">120 °</text>
<mask id="m1410_834" maskUnits="userSpaceOnUse" x="428" y="220" width="1510" height="720"><rect x="428" y="220" width="1510" height="720" fill="#fff"/><rect x="1389.6" y="827.0" width="41" height="15" fill="#000"/></mask>
<g mask="url(#m1410_834)">
<path d="M1459.5,714.9 A106,106 0 0 1 1282.1,817.3" fill="none" stroke="#ff1a00" stroke-width="2"/>
<line x1="1459.5" y1="714.9" x2="1459.5" y2="714.9" stroke="#ff1a00" stroke-width="1" />
<line x1="1282.1" y1="817.3" x2="1282.1" y2="817.3" stroke="#ff1a00" stroke-width="1" />
</g>
<line x1="1454.7" y1="716.2" x2="1464.3" y2="713.6" stroke="#ff1a00" stroke-width="1.6" />
<line x1="1285.7" y1="813.7" x2="1278.6" y2="820.8" stroke="#ff1a00" stroke-width="1.6" />
<text x="1410.1" y="840.5" font-family="Liberation Sans" font-size="17" fill="#cf3420" stroke="#7a2c3a" stroke-width="0.7" paint-order="stroke" text-anchor="middle">150 °</text>
<mask id="m1206_806" maskUnits="userSpaceOnUse" x="428" y="220" width="1510" height="720"><rect x="428" y="220" width="1510" height="720" fill="#fff"/><rect x="1186.3" y="799.0" width="41" height="15" fill="#000"/></mask>
<g mask="url(#m1206_806)">
<path d="M1169.2,865.2 A65,65 0 0 1 1280.2,819.2" fill="none" stroke="#ff1a00" stroke-width="2"/>
<line x1="1169.2" y1="865.2" x2="1169.2" y2="865.2" stroke="#ff1a00" stroke-width="1" />
<line x1="1280.2" y1="819.2" x2="1280.2" y2="819.2" stroke="#ff1a00" stroke-width="1" />
</g>
<line x1="1174.2" y1="865.2" x2="1164.2" y2="865.2" stroke="#ff1a00" stroke-width="1.6" />
<line x1="1276.6" y1="822.8" x2="1283.7" y2="815.7" stroke="#ff1a00" stroke-width="1.6" />
<text x="1206.8" y="812.5" font-family="Liberation Sans" font-size="17" fill="#cf3420" stroke="#7a2c3a" stroke-width="0.7" paint-order="stroke" text-anchor="middle">135 °</text>
<mask id="m1255_713" maskUnits="userSpaceOnUse" x="428" y="220" width="1510" height="720"><rect x="428" y="220" width="1510" height="720" fill="#fff"/><rect x="1239.4" y="706.2" width="32" height="15" fill="#000"/></mask>
<g mask="url(#m1255_713)">
<path d="M1229.1,674.3 A122,122 0 0 1 1264.8,760.6" fill="none" stroke="#ff1a00" stroke-width="2"/>
<line x1="1229.1" y1="674.3" x2="1229.1" y2="674.3" stroke="#ff1a00" stroke-width="1" />
<line x1="1264.8" y1="760.6" x2="1264.8" y2="760.6" stroke="#ff1a00" stroke-width="1" />
</g>
<line x1="1225.5" y1="677.9" x2="1232.6" y2="670.8" stroke="#ff1a00" stroke-width="1.6" />
<line x1="1259.8" y1="760.6" x2="1269.8" y2="760.6" stroke="#ff1a00" stroke-width="1.6" />
<text x="1255.4" y="719.7" font-family="Liberation Sans" font-size="17" fill="#cf3420" stroke="#7a2c3a" stroke-width="0.7" paint-order="stroke" text-anchor="middle">45 °</text>
<path d="M1358.4,487.9 A41.5,41.5 0 0 1 1426.4,535.3" fill="none" stroke="#fff" stroke-width="3"/>
<path d="M1366.9,620.9 A41.5,41.5 0 0 1 1298.9,573.5" fill="none" stroke="#fff" stroke-width="3"/>
<line x1="1358.4" y1="487.9" x2="1298.9" y2="573.5" stroke="#fff" stroke-width="3" />
<line x1="1426.4" y1="535.3" x2="1366.9" y2="620.9" stroke="#fff" stroke-width="3" />
<line x1="1358.4" y1="487.9" x2="1298.9" y2="573.5" stroke="#ff1a00" stroke-width="1.4" stroke-dasharray="6 2"/>
<line x1="1426.4" y1="535.3" x2="1366.9" y2="620.9" stroke="#ff1a00" stroke-width="1.4" stroke-dasharray="6 2"/>
<line x1="1392.4" y1="511.6" x2="1369.4" y2="595.6" stroke="#1010e0" stroke-width="3" />
<line x1="1342.0" y1="517.0" x2="1357.0" y2="527.5" stroke="#ff1a00" stroke-width="1.6" />
<line x1="1390.0" y1="550.5" x2="1404.9" y2="561.0" stroke="#ff1a00" stroke-width="1.6" />
<path d="M1342.0,517.0 L1353.3,520.0 L1348.7,526.6Z" fill="#ff1a00"/>
<path d="M1404.9,561.0 L1393.6,558.0 L1398.2,551.4Z" fill="#ff1a00"/>
<text transform="translate(1375.0,543.7) rotate(35.0)" x="0" y="6" font-family="Liberation Sans" font-size="17" fill="#cf3420" stroke="#7a2c3a" stroke-width="0.7" paint-order="stroke" text-anchor="middle" textLength="52" lengthAdjust="spacingAndGlyphs">19 mm</text>
<text transform="translate(1357.0,570.4) rotate(0.0)" x="0" y="6" font-family="Liberation Sans" font-size="17" fill="#cf3420" stroke="#7a2c3a" stroke-width="0.7" paint-order="stroke" text-anchor="middle">30 °</text>
<circle cx="1358.4" cy="487.9" r="4" fill="#ff1a00"/>
<circle cx="1426.4" cy="535.3" r="4" fill="#ff1a00"/>
<circle cx="1298.9" cy="573.5" r="4" fill="#ff1a00"/>
<circle cx="1366.9" cy="620.9" r="4" fill="#ff1a00"/>
<circle cx="1392.4" cy="511.6" r="4" fill="#ff1a00"/>
<rect x="1324.7" y="589.1" width="16" height="16" fill="none" stroke="#ff8a20" stroke-width="4" />
<circle cx="1332.7" cy="597.1" r="3.5" fill="#10b010"/>
<rect x="1361.4" y="587.6" width="16" height="16" fill="none" stroke="#ff8a20" stroke-width="4" />
<circle cx="1369.4" cy="595.6" r="3.5" fill="#10b010"/>
<circle cx="1240.1" cy="273.6" r="3" fill="#ff9580"/>
<circle cx="1568.2" cy="462.0" r="3" fill="#ff9580"/>
<circle cx="1504.5" cy="702.4" r="3" fill="#ff9580"/>
<circle cx="1357.1" cy="742.3" r="3" fill="#ff9580"/>
<circle cx="1234.2" cy="865.2" r="3" fill="#ff9580"/>
<circle cx="823.8" cy="865.2" r="3" fill="#ff9580"/>
<circle cx="701.8" cy="790.8" r="3" fill="#ff9580"/>
<circle cx="641.4" cy="567.8" r="3" fill="#ff9580"/>
<circle cx="998.2" cy="663.6" r="3" fill="#ff9580"/>
<circle cx="1052.6" cy="461.0" r="3" fill="#ff9580"/>
<circle cx="1142.8" cy="760.6" r="3" fill="#ff9580"/>
<circle cx="825.0" cy="760.6" r="3" fill="#ff9580"/>
<text x="1433" y="458" font-family="Liberation Sans" font-size="10" font-weight="bold" fill="#ff1a00" text-anchor="middle">=40</text>
<text x="1292" y="658" font-family="Liberation Sans" font-size="10" font-weight="bold" fill="#ff1a00" text-anchor="middle">=40</text>
<text x="797.5" y="760" font-family="Liberation Sans" font-size="13" fill="#ff1a00" text-anchor="middle">I7</text>
<text x="797.5" y="868" font-family="Liberation Sans" font-size="13" fill="#ff1a00" text-anchor="middle">I7</text>
<line x1="1024.0" y1="847.8" x2="1033.0" y2="847.8" stroke="#ff1a00" stroke-width="2" />
<path d="M1368.3,495.3 L1376.3,501.3 M1371.3,494.3 L1369.3,499.3 M1375.3,497.3 L1373.3,502.3" stroke="#ff1a00" stroke-width="1.6" fill="none"/>
<path d="M1308.4,579.8 L1316.4,585.8 M1311.4,578.8 L1309.4,583.8 M1315.4,581.8 L1313.4,586.8" stroke="#ff1a00" stroke-width="1.6" fill="none"/>
<path d="M1346.7,608.3 L1354.7,614.3 M1349.7,607.3 L1347.7,612.3 M1353.7,610.3 L1351.7,615.3" stroke="#ff1a00" stroke-width="1.6" fill="none"/>
<path d="M1435,541.5 L1443,547.5 M1438,540.5 L1436,545.5 M1442,543.5 L1440,548.5" stroke="#ff1a00" stroke-width="1.6" fill="none"/>
<path d="M1855.6,239.2 L1867.4,226.6 L1879.2,239.2Z" fill="#8c8eb2"/>
<path d="M1855.6,346.8 L1867,358.6 L1878.4,346.8Z" fill="#8c8eb2"/>
<path d="M1812.8,282 L1801.8,293 L1812.8,304Z" fill="#8c8eb2"/>
<path d="M1921.2,281.2 L1933,293 L1921.2,304.8Z" fill="#8c8eb2"/>
<path d="M1849,237 Q1830,243 1822,255 L1818,250 L1818,262 L1830,259 L1826,257 Q1833,248 1850,243Z" fill="#8c8eb2"/>
<path d="M1884,237 Q1903,243 1911,255 L1915,250 L1915,262 L1903,259 L1907,257 Q1900,248 1883,243Z" fill="#8c8eb2"/>
<rect x="1834" y="260" width="66" height="66" rx="10" fill="#9496b4"/>
<clipPath id="cNC"><rect x="1834" y="260" width="66" height="66" rx="10"/></clipPath><g clip-path="url(#cNC)">
<rect x="1831" y="257" width="14" height="14" fill="#c8c8d8" transform="rotate(45 1838 264)"/>
<rect x="1889" y="257" width="14" height="14" fill="#c8c8d8" transform="rotate(45 1896 264)"/>
<rect x="1831" y="315" width="14" height="14" fill="#c8c8d8" transform="rotate(45 1838 322)"/>
<rect x="1889" y="315" width="14" height="14" fill="#c8c8d8" transform="rotate(45 1896 322)"/>
</g>
<rect x="1842" y="267.5" width="50.5" height="51" fill="#cacada"/>
<rect x="1841.8" y="267.9" width="3" height="3" fill="#3a3a66" transform="rotate(45 1843.3 269.4)"/>
<rect x="1888.9" y="267.9" width="3" height="3" fill="#3a3a66" transform="rotate(45 1890.4 269.4)"/>
<rect x="1888.9" y="314.8" width="3" height="3" fill="#3a3a66" transform="rotate(45 1890.4 316.3)"/>
<path d="M1853,271.5 H1881 L1889,279.5 V306.5 L1881,314.5 H1853 L1845,306.5 V279.5Z" fill="none" stroke="#a2a2be" stroke-width="1"/>
<text x="1868.9" y="299.2" font-family="Liberation Sans" font-size="14" font-weight="bold" fill="#000" text-anchor="middle" textLength="24" lengthAdjust="spacingAndGlyphs">TOP</text>
<path d="M1843,316 V282" stroke="#a8f0a8" stroke-width="1.6"/><path d="M1843,316.5 H1878" stroke="#f8b0b0" stroke-width="1.6"/><path d="M1843,316 L1832,328" stroke="#2020f0" stroke-width="1.6"/>
<text x="1848" y="269" font-family="Liberation Sans" font-size="8" fill="#80e080" text-anchor="middle">Y</text><text x="1895" y="314" font-family="Liberation Sans" font-size="8" fill="#f07070" text-anchor="middle">X</text><text x="1836" y="328" font-family="Liberation Sans" font-size="8" fill="#2020f0" text-anchor="middle">Z</text>
<path d="M1890,340 L1899,336 L1909,339 V350 L1900,354 L1890,350Z" fill="#9092b4"/><path d="M1914,341 H1926 L1920,347Z" fill="#3a3a5a"/>
<path d="M1904,904 V882" stroke="#10a010" stroke-width="2"/><path d="M1901,886 L1904,878 L1907,886Z" fill="#10a010"/>
<path d="M1904,904 H1926" stroke="#a01010" stroke-width="2"/><path d="M1922,901 L1930,904 L1922,907Z" fill="#a01010"/>
<circle cx="1904" cy="904" r="2.5" fill="#1a1a9a"/>
<text x="1906" y="882" font-family="Liberation Sans" font-size="10" fill="#000">Y</text>
<text x="1905" y="902" font-family="Liberation Sans" font-size="10" fill="#000">Z</text>
<text x="1931" y="906" font-family="Liberation Sans" font-size="10" fill="#000">X</text>
</g>
<rect x="431.5" y="942.5" width="167" height="30" fill="#f0f0f0" stroke="#d9d9d9" stroke-width="1" />
<rect x="598.5" y="940.5" width="202" height="35" fill="#ffffff" stroke="#d9d9d9" stroke-width="1" />
<g transform="translate(446,944) scale(1.0)"><path d="M0,0 H13 V4 H5 V9 H11 V13 H5 V22 H0Z" fill="#d41c1c" stroke="#8a0a0a" stroke-width="0.6"/><circle cx="16" cy="15" r="6" fill="none" stroke="#3d6eb4" stroke-width="4" stroke-dasharray="2.2 1.6"/><circle cx="16" cy="15" r="5.2" fill="none" stroke="#3d6eb4" stroke-width="2.2"/><circle cx="16" cy="15" r="2.2" fill="#fff"/></g>
<g transform="translate(619,946) scale(1.0)"><path d="M0,0 H13 V4 H5 V9 H11 V13 H5 V22 H0Z" fill="#d41c1c" stroke="#8a0a0a" stroke-width="0.6"/><circle cx="16" cy="15" r="6" fill="none" stroke="#3d6eb4" stroke-width="4" stroke-dasharray="2.2 1.6"/><circle cx="16" cy="15" r="5.2" fill="none" stroke="#3d6eb4" stroke-width="2.2"/><circle cx="16" cy="15" r="2.2" fill="#fff"/></g>
<text x="476.5" y="962.7" font-family="Liberation Sans" font-size="18" fill="#000" text-anchor="start" textLength="75.4" lengthAdjust="spacingAndGlyphs" >Start page</text>
<rect x="559.5" y="946.5" width="20" height="20" fill="#bdbdbd" stroke="#9a9a9a" stroke-width="1" rx="2" />
<path d="M564,951 L575,962 M575,951 L564,962" stroke="#fff" stroke-width="2.6"/>
<text x="649.4" y="964.5" font-family="Liberation Sans" font-size="18" fill="#000" text-anchor="start" textLength="103.7" lengthAdjust="spacingAndGlyphs" >Unnamed : 1*</text>
<rect x="760" y="947.5" width="21" height="21" fill="#e8643c" stroke="#c84a2a" stroke-width="1" rx="2" />
<path d="M765,952.5 L776,963.5 M776,952.5 L765,963.5" stroke="#fff" stroke-width="2.8"/>
<rect x="0" y="975" width="1938" height="43" fill="#f0f0f0" />
<clipPath id="cP"><rect x="0" y="980" width="20" height="35"/></clipPath>
<text x="3.5" y="1005.0" font-family="Liberation Sans" font-size="18" fill="#000" text-anchor="start" clip-path="url(#cP)">Process</text>
<text x="29.9" y="1005.0" font-family="Liberation Sans" font-size="18" fill="#000" text-anchor="start" textLength="427.8" lengthAdjust="spacingAndGlyphs" >(C) Create a coincident constraint on the selected item</text>
<path d="M1647,996 Q1651,988 1660,990" fill="none" stroke="#777" stroke-width="3"/><path d="M1651,1007 Q1660,1010 1664,1004" fill="none" stroke="#777" stroke-width="3"/>
<circle cx="1662" cy="991" r="3.6" fill="#333"/><circle cx="1649" cy="1004" r="3.6" fill="#333"/>
<clipPath id="cG"><rect x="1668" y="980" width="53" height="35"/></clipPath>
<text x="1670.0" y="1005.9" font-family="Liberation Sans" font-size="18" fill="#000" text-anchor="start" textLength="55.0" lengthAdjust="spacingAndGlyphs" clip-path="url(#cG)">Gesture</text>
<path d="M1725,996 L1734,996 L1729.5,1002Z" fill="#000"/>
<line x1="1747.5" y1="981.0" x2="1747.5" y2="1015.0" stroke="#d0d0d0" stroke-width="1" />
<text x="1754.3" y="1005.9" font-family="Liberation Sans" font-size="18" fill="#000" text-anchor="start" textLength="183.0" lengthAdjust="spacingAndGlyphs" >347.18 mm x 165.33 mm</text>
<rect x="1085" y="179" width="449" height="30" fill="#c8c8c8" />
<rect x="1082.5" y="176.5" width="448" height="29" fill="#ffffff" stroke="#767676" stroke-width="1" />
<text x="1091.6" y="198.0" font-family="Liberation Sans" font-size="18" fill="#333" text-anchor="start" textLength="429.0" lengthAdjust="spacingAndGlyphs" >Create a coincident constraint on the selected item (C)</text></svg></body></html>
